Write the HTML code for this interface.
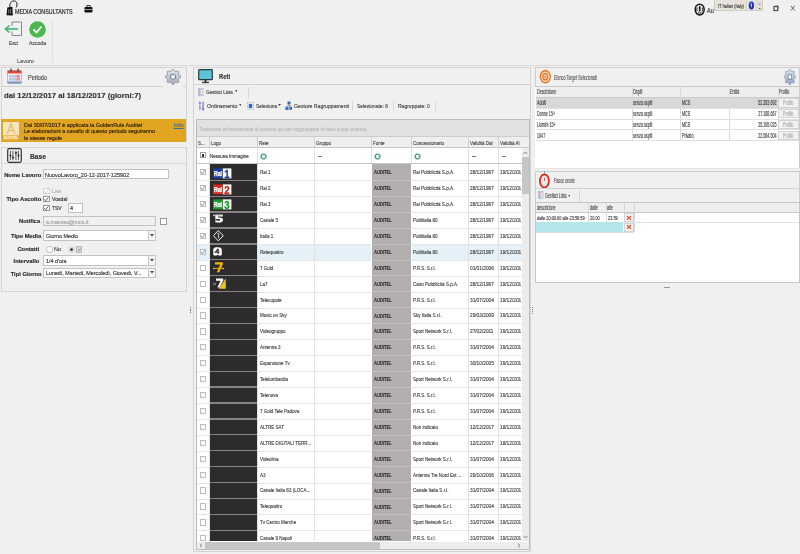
<!DOCTYPE html><html><head><meta charset="utf-8"><style>
*{margin:0;padding:0}
html,body{width:800px;height:554px;overflow:hidden;background:#f0f0f0}
body{position:relative;font-family:"Liberation Sans",sans-serif}
.a{position:absolute}
.t{position:absolute;white-space:nowrap;line-height:1;transform-origin:0 50%;font-family:"Liberation Sans",sans-serif;-webkit-text-stroke:0.15px currentColor}
</style></head><body><div id="app" style="position:absolute;left:0;top:0;width:800px;height:554px;will-change:transform">
<svg class="a" style="left:5.00px;top:0.00px" width="13" height="17" viewBox="0 0 13 17"><path d="M5.5 9 C4 5.5 5 1.2 8.5 0.9 C11.8 0.7 13 4 11.2 7.5" fill="none" stroke="#1a1a1a" stroke-width="1"/><path d="M1.5 15.2 L2.3 7.6 L7.4 6.8 L7.8 15.4 Z" fill="#111"/><path d="M3.7 9.2 V13.6 M5.6 9 V13.6" stroke="#d8d8d8" stroke-width=".55"/></svg>
<div class="t" style="left:15.00px;top:8.05px;font-size:7px;transform:scaleX(0.77);color:#1a1a1a;font-weight:normal;">MEDIA CONSULTANTS</div>
<svg class="a" style="left:84.00px;top:5.00px" width="9" height="8" viewBox="0 0 9 8"><rect x="0.5" y="2" width="8" height="5.5" rx="1" fill="#111"/><rect x="3" y="0.5" width="3" height="2" fill="none" stroke="#111" stroke-width=".8"/><rect x="0.5" y="4" width="8" height=".6" fill="#eee"/></svg>
<svg class="a" style="left:694.30px;top:2.80px" width="11.4" height="13.2" viewBox="0 0 11.4 13.2"><ellipse cx="5.7" cy="6.6" rx="5.2" ry="6.1" fill="#111"/><ellipse cx="5.7" cy="6.6" rx="3.8" ry="4.6" fill="#f4f4f4"/><rect x="4.9" y="3.2" width="1.6" height="5.2" fill="#111"/><path d="M3.2 4.5 Q2.4 6.6 3.2 8.4 M8.2 4.5 Q9 6.6 8.2 8.4 M4 9.6 Q5.7 10.6 7.4 9.6" fill="none" stroke="#111" stroke-width=".9"/></svg>
<div class="t" style="left:707.00px;top:7.05px;font-size:7px;transform:scaleX(0.8);color:#333;font-weight:normal;">Au</div>
<div class="a" style="left:714.00px;top:0.00px;width:48.50px;height:11.00px;background:#e4e2da;border:1px solid #cfcdc4;box-sizing:border-box;border-top:none"></div>
<div class="t" style="left:717.50px;top:3.00px;font-size:6px;transform:scaleX(0.66);color:#3a3a3a;font-weight:normal;">IT Italian (Italy)</div>
<div class="a" style="left:746.00px;top:1.00px;width:1.00px;height:9.00px;background:#d2d0c8"></div>
<svg class="a" style="left:748.00px;top:1.20px" width="7" height="9" viewBox="0 0 7 9"><ellipse cx="3.4" cy="4.4" rx="2.6" ry="4" fill="#1c30b0"/><ellipse cx="3.1" cy="3.6" rx="1.2" ry="2" fill="#4a6ae8"/><rect x="3" y="2.6" width=".9" height="3.6" fill="#c8d0f0"/></svg>
<div class="a" style="left:757.00px;top:1.00px;width:1.00px;height:9.00px;background:#d8d6ce"></div>
<svg class="a" style="left:757.60px;top:2.00px" width="4" height="8" viewBox="0 0 4 8"><path d="M0.8 2.6 L1.8 1.4 L2.8 2.6 Z M0.8 6 L1.8 7.2 L2.8 6 Z" fill="#333"/></svg>
<svg class="a" style="left:773.20px;top:5.20px" width="6" height="6.5" viewBox="0 0 6 6.5"><rect x="0.9" y="1.6" width="3.8" height="4" fill="none" stroke="#444" stroke-width="1.1"/><path d="M1.8 0.7 H5.4 V4.4" fill="none" stroke="#666" stroke-width=".6"/></svg>
<svg class="a" style="left:789.80px;top:5.20px" width="6" height="6.5" viewBox="0 0 6 6.5"><path d="M0.8 0.8 L4.8 5.6 M4.8 0.8 L0.8 5.6" stroke="#555" stroke-width=".85"/></svg>
<svg class="a" style="left:4.00px;top:21.00px" width="20" height="16" viewBox="0 0 20 16"><path d="M8 1 H17.5 V14.5 H8 M8 1 V5 M8 10.5 V14.5" fill="none" stroke="#8a8a8a" stroke-width="1"/><path d="M2 8 H14" stroke="#3cb371" stroke-width="1.6"/><path d="M5.5 4.5 L1.5 8 L5.5 11.5" fill="none" stroke="#3cb371" stroke-width="1.6"/></svg>
<svg class="a" style="left:29.00px;top:21.00px" width="17" height="17" viewBox="0 0 17 17"><circle cx="8.5" cy="8.5" r="8.3" fill="#4cb74c"/><path d="M4.5 8.5 L7.5 11.5 L12.5 5.5" fill="none" stroke="#fff" stroke-width="1.8"/></svg>
<div class="t" style="left:9.00px;top:40.10px;font-size:6px;transform:scaleX(0.8);color:#444;font-weight:normal;">Esci</div>
<div class="t" style="left:29.00px;top:40.10px;font-size:6px;transform:scaleX(0.85);color:#444;font-weight:normal;">Accoda</div>
<div class="t" style="left:17.00px;top:58.30px;font-size:6px;transform:scaleX(0.92);color:#555;font-weight:normal;">Lavoro</div>
<div class="a" style="left:51.50px;top:20.00px;width:1.00px;height:43.00px;background:#e2e2e2"></div>
<div class="a" style="left:0.00px;top:64.60px;width:800.00px;height:1.10px;background:#dadada"></div>
<div class="a" style="left:1.00px;top:67.00px;width:186.00px;height:75.00px;border:1px solid #d4d4d4;box-sizing:border-box;border-bottom:none"></div>
<svg class="a" style="left:7.00px;top:68.20px" width="15" height="16" viewBox="0 0 15 16"><rect x="0.5" y="2.5" width="14" height="13" rx="1" fill="#f2f5fb" stroke="#9aaed0" stroke-width=".8"/><rect x="0.5" y="2.5" width="14" height="3" fill="#e5483c"/><rect x="2" y="7" width="7.4" height="5.6" fill="#b4c0dc"/><rect x="9.4" y="7" width="3.6" height="5.6" fill="#ec8c8a"/><path d="M4.5 7 V12.6 M7 7 V12.6 M2 9.8 H13" stroke="#e8eef8" stroke-width=".6"/><rect x="0.5" y="13.4" width="14" height="2.1" fill="#8298c6"/><rect x="3.2" y="0.5" width="1.6" height="3.5" rx=".5" fill="#5a5a5a"/><rect x="10.4" y="0.5" width="1.6" height="3.5" rx=".5" fill="#5a5a5a"/></svg>
<div class="t" style="left:28.00px;top:75.12px;font-size:6.8px;transform:scaleX(0.81);color:#444;font-weight:normal;">Periodo</div>
<div class="a" style="left:1.00px;top:86.00px;width:162.00px;height:1.00px;background:#cfcfcf"></div>
<div class="a" style="left:183.00px;top:86.00px;width:4.00px;height:1.00px;background:#cfcfcf"></div>
<svg class="a" style="left:164.8px;top:69.2px" width="16" height="15.6" viewBox="0 0 20 20" preserveAspectRatio="none"><defs><linearGradient id="g1" x1="0" y1="0" x2="0" y2="1"><stop offset="0" stop-color="#e4e7ec"/><stop offset="1" stop-color="#a4acba"/></linearGradient></defs><polygon points="9.04,0.25 10.96,0.25 12.21,2.73 13.58,3.30 16.22,2.42 17.58,3.78 16.70,6.42 17.27,7.79 19.75,9.04 19.75,10.96 17.27,12.21 16.70,13.58 17.58,16.22 16.22,17.58 13.58,16.70 12.21,17.27 10.96,19.75 9.04,19.75 7.79,17.27 6.42,16.70 3.78,17.58 2.42,16.22 3.30,13.58 2.73,12.21 0.25,10.96 0.25,9.04 2.73,7.79 3.30,6.42 2.42,3.78 3.78,2.42 6.42,3.30 7.79,2.73" fill="url(#g1)" stroke="#8c919c" stroke-width="1" stroke-linejoin="round"/><circle cx="10" cy="10" r="3.2" fill="#f4f6fa" stroke="#7e8696" stroke-width="1.3"/></svg>
<div class="t" style="left:4.00px;top:92.30px;font-size:7.3px;transform:scaleX(1.06);color:#333;font-weight:bold;">dal 12/12/2017 al 18/12/2017 (giorni:7)</div>
<div class="a" style="left:1.00px;top:118.60px;width:185.20px;height:23.40px;background:#e2a521"></div>
<svg class="a" style="left:3.00px;top:122.00px" width="17" height="18" viewBox="0 0 17 18"><rect x="0" y="0" width="16" height="13.5" fill="#f4e4bf"/><path d="M4 12 L8 2 L12 12 M5.5 8.5 H10.5" fill="none" stroke="#e6c274" stroke-width="1.6"/><rect x="0" y="13.5" width="16" height="4.5" fill="#eab04a"/><text x="8" y="17.2" font-size="3.4" fill="#fff5dc" text-anchor="middle" font-family="Liberation Sans" font-weight="bold">AUDITEL</text></svg>
<div class="t" style="left:24.00px;top:122.59px;font-size:5.9px;transform:scaleX(0.92);color:#2e2000;font-weight:normal;">Dal 30/07/2017 è applicata la GoldenRule Auditel</div>
<div class="t" style="left:24.00px;top:129.28px;font-size:5.9px;transform:scaleX(0.92);color:#2e2000;font-weight:normal;">Le elaborazioni a cavallo di questo periodo seguiranno</div>
<div class="t" style="left:24.00px;top:135.99px;font-size:5.9px;transform:scaleX(0.92);color:#2e2000;font-weight:normal;">le stesse regole</div>
<div class="t" style="left:173.70px;top:123.09px;font-size:5.9px;transform:scaleX(1.0);color:#3d6f92;font-weight:normal;text-decoration:underline">Info</div>
<div class="a" style="left:1.00px;top:147.00px;width:186.00px;height:144.50px;border:1px solid #d4d4d4;box-sizing:border-box"></div>
<svg class="a" style="left:7.00px;top:148.00px" width="15" height="15" viewBox="0 0 15 15"><rect x="0.7" y="0.7" width="13.6" height="13.6" rx="1.5" fill="none" stroke="#333" stroke-width="1.2"/><path d="M3.4 2.8 V12.2 M5.9 2.8 V12.2 M8.9 2.8 V12.2 M11.4 2.8 V12.2" stroke="#333" stroke-width=".8"/><circle cx="3.5" cy="7.5" r="1" fill="#222"/><circle cx="6" cy="9.5" r="1" fill="#222"/><circle cx="9" cy="5" r="1" fill="#222"/><circle cx="11.5" cy="7.5" r="1" fill="#222"/></svg>
<div class="t" style="left:30.00px;top:152.88px;font-size:7.2px;transform:scaleX(0.93);color:#333;font-weight:bold;">Base</div>
<div class="a" style="left:1.00px;top:163.20px;width:186.00px;height:1.00px;background:#d6d6d6"></div>
<div class="t" style="right:758.80px;top:172.57px;font-size:5.8px;transform:scaleX(1.0);transform-origin:100% 50%;color:#2a2a2a;font-weight:bold;">Nome Lavoro</div>
<div class="a" style="left:43.10px;top:169.00px;width:125.50px;height:10.40px;background:#fff;border:1px solid #c2c2c2;box-sizing:border-box"></div>
<div class="t" style="left:45.40px;top:172.67px;font-size:5.8px;transform:scaleX(0.95);color:#333;font-weight:normal;">NuovoLavoro_20-12-2017-125902</div>
<div class="t" style="right:758.80px;top:196.97px;font-size:5.8px;transform:scaleX(1.0);transform-origin:100% 50%;color:#2a2a2a;font-weight:bold;">Tipo Ascolto</div>
<div class="a" style="left:43.30px;top:187.60px;width:6.30px;height:6.30px;background:#fff;border:1px solid #d4d4d4;box-sizing:border-box"></div>
<svg class="a" style="left:43.30px;top:187.60px" width="6.3" height="6.3" viewBox="0 0 6.3 6.3"><path d="M1.3 3.3 L2.7 4.8 L5.2 1.5" fill="none" stroke="#c4c4c4" stroke-width="0.85"/></svg>
<div class="t" style="left:51.50px;top:188.57px;font-size:5.8px;transform:scaleX(0.86);color:#b0b0b0;font-weight:normal;">Live</div>
<div class="a" style="left:43.30px;top:196.20px;width:6.30px;height:6.30px;background:#fff;border:1px solid #9a9a9a;box-sizing:border-box"></div>
<svg class="a" style="left:43.30px;top:196.20px" width="6.3" height="6.3" viewBox="0 0 6.3 6.3"><path d="M1.3 3.3 L2.7 4.8 L5.2 1.5" fill="none" stroke="#444" stroke-width="0.85"/></svg>
<div class="t" style="left:51.50px;top:197.27px;font-size:5.8px;transform:scaleX(0.885);color:#333;font-weight:normal;">Vosdal</div>
<div class="a" style="left:43.30px;top:205.20px;width:6.30px;height:6.30px;background:#fff;border:1px solid #9a9a9a;box-sizing:border-box"></div>
<svg class="a" style="left:43.30px;top:205.20px" width="6.3" height="6.3" viewBox="0 0 6.3 6.3"><path d="M1.3 3.3 L2.7 4.8 L5.2 1.5" fill="none" stroke="#444" stroke-width="0.85"/></svg>
<div class="t" style="left:51.50px;top:206.37px;font-size:5.8px;transform:scaleX(0.86);color:#333;font-weight:normal;">TSV</div>
<div class="a" style="left:67.50px;top:203.00px;width:15.00px;height:10.10px;background:#fff;border:1px solid #c2c2c2;box-sizing:border-box"></div>
<div class="t" style="left:69.60px;top:206.37px;font-size:5.8px;transform:scaleX(0.95);color:#333;font-weight:normal;">4</div>
<div class="t" style="right:759.70px;top:219.37px;font-size:5.8px;transform:scaleX(1.0);transform-origin:100% 50%;color:#2a2a2a;font-weight:bold;">Notifica</div>
<div class="a" style="left:43.30px;top:216.00px;width:113.20px;height:10.20px;background:#f0f0f0;border:1px solid #c2c2c2;box-sizing:border-box"></div>
<div class="t" style="left:45.60px;top:219.57px;font-size:5.8px;transform:scaleX(0.92);color:#a0a0a0;font-weight:normal;">a.mazzeo@mcs.it</div>
<div class="a" style="left:160.00px;top:218.20px;width:6.50px;height:6.60px;background:#fff;border:1px solid #9a9a9a;box-sizing:border-box"></div>
<div class="t" style="right:758.80px;top:234.27px;font-size:5.8px;transform:scaleX(1.0);transform-origin:100% 50%;color:#2a2a2a;font-weight:bold;">Tipo Media</div>
<div class="a" style="left:43.30px;top:230.30px;width:113.00px;height:10.50px;background:#fff;border:1px solid #c2c2c2;box-sizing:border-box"></div>
<div class="t" style="left:45.60px;top:234.07px;font-size:5.8px;transform:scaleX(0.92);color:#333;font-weight:normal;">Giorno Medio</div>
<div class="a" style="left:147.80px;top:230.30px;width:8.50px;height:10.50px;border:1px solid #c2c2c2;box-sizing:border-box;background:#f5f5f5"></div>
<svg class="a" style="left:150.00px;top:234.35px" width="4" height="3" viewBox="0 0 4 3"><path d="M0 0 H4 L2 2.5 Z" fill="#444"/></svg>
<div class="t" style="right:760.70px;top:246.67px;font-size:5.8px;transform:scaleX(1.0);transform-origin:100% 50%;color:#2a2a2a;font-weight:bold;">Contatti</div>
<svg class="a" style="left:45.60px;top:245.60px" width="7.2" height="7.2" viewBox="0 0 7.2 7.2"><circle cx="3.6" cy="3.6" r="3.1" fill="#fff" stroke="#a8a8a8" stroke-width=".7"/></svg>
<div class="t" style="left:53.70px;top:246.77px;font-size:5.8px;transform:scaleX(0.95);color:#444;font-weight:normal;">No</div>
<svg class="a" style="left:68.20px;top:245.60px" width="7.2" height="7.2" viewBox="0 0 7.2 7.2"><circle cx="3.6" cy="3.6" r="3.1" fill="#e4e4e4" stroke="#c8c8c8" stroke-width=".6"/><circle cx="3.6" cy="3.6" r="1.3" fill="#222"/></svg>
<div class="a" style="left:76.20px;top:245.50px;width:6.00px;height:7.50px;background:#d4d4d4;border:1px solid #bdbdbd;box-sizing:border-box"></div>
<svg class="a" style="left:76.20px;top:245.50px" width="6" height="7.5" viewBox="0 0 6 7.5"><path d="M1.5 3.5 L2.8 5 L4.8 2.2" fill="none" stroke="#888" stroke-width=".6"/></svg>
<div class="t" style="right:760.70px;top:258.97px;font-size:5.8px;transform:scaleX(1.0);transform-origin:100% 50%;color:#2a2a2a;font-weight:bold;">Intervallo</div>
<div class="a" style="left:43.30px;top:255.00px;width:113.00px;height:10.70px;background:#fff;border:1px solid #c2c2c2;box-sizing:border-box"></div>
<div class="t" style="left:45.60px;top:258.77px;font-size:5.8px;transform:scaleX(0.92);color:#333;font-weight:normal;">1/4 d'ora</div>
<div class="a" style="left:147.80px;top:255.00px;width:8.50px;height:10.70px;border:1px solid #c2c2c2;box-sizing:border-box;background:#f5f5f5"></div>
<svg class="a" style="left:150.00px;top:259.15px" width="4" height="3" viewBox="0 0 4 3"><path d="M0 0 H4 L2 2.5 Z" fill="#444"/></svg>
<div class="t" style="right:758.50px;top:271.57px;font-size:5.8px;transform:scaleX(1.0);transform-origin:100% 50%;color:#2a2a2a;font-weight:bold;">Tipi Giorno</div>
<div class="a" style="left:43.30px;top:267.60px;width:113.00px;height:10.10px;background:#fff;border:1px solid #c2c2c2;box-sizing:border-box"></div>
<div class="t" style="left:45.60px;top:271.27px;font-size:5.8px;transform:scaleX(0.92);color:#333;font-weight:normal;">Lunedì, Martedì, Mercoledì, Giovedì, V...</div>
<div class="a" style="left:147.80px;top:267.60px;width:8.50px;height:10.10px;border:1px solid #c2c2c2;box-sizing:border-box;background:#f5f5f5"></div>
<svg class="a" style="left:150.00px;top:271.45px" width="4" height="3" viewBox="0 0 4 3"><path d="M0 0 H4 L2 2.5 Z" fill="#444"/></svg>
<div class="a" style="left:189.70px;top:306.80px;width:1.10px;height:1.10px;background:#707070"></div>
<div class="a" style="left:189.70px;top:308.55px;width:1.10px;height:1.10px;background:#707070"></div>
<div class="a" style="left:189.70px;top:310.30px;width:1.10px;height:1.10px;background:#707070"></div>
<div class="a" style="left:189.70px;top:312.05px;width:1.10px;height:1.10px;background:#707070"></div>
<div class="a" style="left:532.10px;top:307.40px;width:1.10px;height:1.10px;background:#808080"></div>
<div class="a" style="left:532.10px;top:309.15px;width:1.10px;height:1.10px;background:#808080"></div>
<div class="a" style="left:532.10px;top:310.90px;width:1.10px;height:1.10px;background:#808080"></div>
<div class="a" style="left:532.10px;top:312.65px;width:1.10px;height:1.10px;background:#808080"></div>
<div class="a" style="left:193.20px;top:67.20px;width:337.60px;height:484.80px;border:1px solid #d4d4d4;box-sizing:border-box"></div>
<svg class="a" style="left:198.00px;top:69.00px" width="15" height="15" viewBox="0 0 15 15"><rect x="0.7" y="0.7" width="13.6" height="10" rx="0.8" fill="#5bc4d8" stroke="#2c3a40" stroke-width="1.2"/><rect x="6.5" y="10.7" width="2" height="2.3" fill="#2c3a40"/><rect x="4" y="12.8" width="7" height="1.3" fill="#2c3a40"/></svg>
<div class="t" style="left:219.00px;top:73.28px;font-size:7.2px;transform:scaleX(0.81);color:#333;font-weight:bold;">Reti</div>
<div class="a" style="left:193.20px;top:84.30px;width:337.60px;height:1.00px;background:#d2d2d2"></div>
<svg class="a" style="left:197.80px;top:87.80px" width="6.6" height="8.2" viewBox="0 0 6.6 8.2"><rect x="0.4" y="0.4" width="5.8" height="7.3999999999999995" fill="#f6f6fb" stroke="#9aa6cc" stroke-width=".6"/><rect x="1" y="1.31" width="1.6" height="1.3" fill="#e8743a"/><rect x="1" y="3.53" width="1.6" height="1.3" fill="#e8743a"/><rect x="1" y="5.74" width="1.6" height="1.3" fill="#6a8ad8"/><path d="M3.2 1.96 H5.6 M3.2 4.18 H5.6 M3.2 6.39 H5.6" stroke="#7a86b8" stroke-width=".6"/></svg>
<div class="t" style="left:206.00px;top:88.73px;font-size:6.2px;transform:scaleX(0.73);color:#444;font-weight:normal;">Gestisci Lista</div>
<svg class="a" style="left:234.60px;top:90.40px" width="2.6" height="1.9" viewBox="0 0 2.6 1.9"><path d="M0 0 H3 L1.5 2 Z" fill="#444"/></svg>
<div class="a" style="left:248.30px;top:87.00px;width:1.00px;height:10.50px;background:#d8d8d8"></div>
<svg class="a" style="left:197.60px;top:100.60px" width="7" height="10" viewBox="0 0 7 10"><path d="M1.9 2 V9.5 M5.1 0.5 V8" stroke="#9a86d0" stroke-width=".9"/><path d="M0.5 2.6 L1.9 0.3 L3.3 2.6 Z" fill="#8a5ad0"/><path d="M3.7 7.4 L5.1 9.7 L6.5 7.4 Z" fill="#2a6ad0"/><path d="M5.1 1 V7.5" stroke="#5a8ad8" stroke-width=".9"/><rect x="1.3" y="5.5" width="1.2" height="2.2" fill="#d06aa0"/></svg>
<div class="t" style="left:206.90px;top:102.73px;font-size:6.2px;transform:scaleX(0.85);color:#444;font-weight:normal;">Ordinamento</div>
<svg class="a" style="left:238.90px;top:104.40px" width="2.6" height="1.9" viewBox="0 0 2.6 1.9"><path d="M0 0 H3 L1.5 2 Z" fill="#444"/></svg>
<svg class="a" style="left:247.20px;top:101.80px" width="7" height="8" viewBox="0 0 7 8"><rect x="0.4" y="0.4" width="6.2" height="7.2" fill="none" stroke="#777" stroke-width=".5" stroke-dasharray="1 .8"/><rect x="1.8" y="1.9" width="3.4" height="4.2" fill="#2a6ac8"/></svg>
<div class="t" style="left:255.60px;top:102.73px;font-size:6.2px;transform:scaleX(0.78);color:#444;font-weight:normal;">Seleziona</div>
<svg class="a" style="left:278.40px;top:104.40px" width="2.6" height="1.9" viewBox="0 0 2.6 1.9"><path d="M0 0 H3 L1.5 2 Z" fill="#444"/></svg>
<svg class="a" style="left:284.80px;top:100.80px" width="7.5" height="9.5" viewBox="0 0 7.5 9.5"><rect x="2.5" y="0.5" width="3" height="3" fill="#4a6a9a"/><rect x="0.3" y="5.8" width="3.2" height="3.2" fill="#3a7ad8"/><rect x="4.3" y="5.8" width="3" height="3" fill="#4a6a9a"/><path d="M4 3.5 V5 M1.9 5 H5.8 V5.8 M1.9 5 V5.8" fill="none" stroke="#555" stroke-width=".5"/></svg>
<div class="t" style="left:294.00px;top:102.73px;font-size:6.2px;transform:scaleX(0.835);color:#444;font-weight:normal;">Gestore Ragruppamenti</div>
<div class="a" style="left:352.00px;top:100.50px;width:1.00px;height:10.50px;background:#d8d8d8"></div>
<div class="t" style="left:357.00px;top:102.73px;font-size:6.2px;transform:scaleX(0.79);color:#444;font-weight:normal;">Selezionate: 6</div>
<div class="a" style="left:393.00px;top:100.50px;width:1.00px;height:10.50px;background:#d8d8d8"></div>
<div class="t" style="left:397.50px;top:102.73px;font-size:6.2px;transform:scaleX(0.81);color:#444;font-weight:normal;">Ragruppate: 0</div>
<div class="a" style="left:435.00px;top:100.50px;width:1.00px;height:10.50px;background:#d8d8d8"></div>
<div class="a" style="left:196.40px;top:119.30px;width:333.20px;height:430.50px;background:#fff;border:1px solid #bcbcbc;box-sizing:border-box"></div>
<div class="a" style="left:197.40px;top:120.30px;width:331.20px;height:15.90px;background:#e2e2e2"></div>
<div class="t" style="left:198.60px;top:126.33px;font-size:6.2px;transform:scaleX(0.761);color:#b8b8b8;font-weight:normal;">Trascinare un'intestazione di colonna qui per raggruppare in base a tale colonna.</div>
<div class="a" style="left:197.40px;top:136.00px;width:331.20px;height:1.00px;background:#cdcdcd"></div>
<div class="a" style="left:197.40px;top:137.00px;width:331.20px;height:10.60px;background:#efefef"></div>
<div class="a" style="left:197.40px;top:147.40px;width:331.20px;height:1.00px;background:#c8c8c8"></div>
<div class="t" style="left:198.40px;top:139.73px;font-size:6.2px;transform:scaleX(0.73);color:#444;font-weight:normal;">S...</div>
<div class="t" style="left:210.80px;top:139.73px;font-size:6.2px;transform:scaleX(0.73);color:#444;font-weight:normal;">Logo</div>
<div class="t" style="left:258.80px;top:139.73px;font-size:6.2px;transform:scaleX(0.73);color:#444;font-weight:normal;">Rete</div>
<div class="t" style="left:315.70px;top:139.73px;font-size:6.2px;transform:scaleX(0.73);color:#444;font-weight:normal;">Gruppo</div>
<div class="t" style="left:372.70px;top:139.73px;font-size:6.2px;transform:scaleX(0.73);color:#444;font-weight:normal;">Fonte</div>
<div class="t" style="left:412.60px;top:139.73px;font-size:6.2px;transform:scaleX(0.73);color:#444;font-weight:normal;">Concessionario</div>
<div class="t" style="left:469.50px;top:139.73px;font-size:6.2px;transform:scaleX(0.73);color:#444;font-weight:normal;">Validità Dal</div>
<div class="t" style="left:499.70px;top:139.73px;font-size:6.2px;transform:scaleX(0.73);color:#444;font-weight:normal;">Validità Al</div>
<div class="a" style="left:209.40px;top:137.00px;width:1.00px;height:10.50px;background:#d0d0d0"></div>
<div class="a" style="left:257.40px;top:137.00px;width:1.00px;height:10.50px;background:#d0d0d0"></div>
<div class="a" style="left:314.30px;top:137.00px;width:1.00px;height:10.50px;background:#d0d0d0"></div>
<div class="a" style="left:371.30px;top:137.00px;width:1.00px;height:10.50px;background:#d0d0d0"></div>
<div class="a" style="left:411.20px;top:137.00px;width:1.00px;height:10.50px;background:#d0d0d0"></div>
<div class="a" style="left:468.10px;top:137.00px;width:1.00px;height:10.50px;background:#d0d0d0"></div>
<div class="a" style="left:498.30px;top:137.00px;width:1.00px;height:10.50px;background:#d0d0d0"></div>
<div class="a" style="left:209.40px;top:148.40px;width:1.00px;height:15.40px;background:#e0e0e0"></div>
<div class="a" style="left:257.40px;top:148.40px;width:1.00px;height:15.40px;background:#e0e0e0"></div>
<div class="a" style="left:314.30px;top:148.40px;width:1.00px;height:15.40px;background:#e0e0e0"></div>
<div class="a" style="left:371.30px;top:148.40px;width:1.00px;height:15.40px;background:#e0e0e0"></div>
<div class="a" style="left:411.20px;top:148.40px;width:1.00px;height:15.40px;background:#e0e0e0"></div>
<div class="a" style="left:468.10px;top:148.40px;width:1.00px;height:15.40px;background:#e0e0e0"></div>
<div class="a" style="left:498.30px;top:148.40px;width:1.00px;height:15.40px;background:#e0e0e0"></div>
<div class="a" style="left:197.40px;top:163.40px;width:331.20px;height:1.00px;background:#c4c4c4"></div>
<div class="a" style="left:200.20px;top:152.20px;width:5.60px;height:6.20px;background:#fff;border:1px solid #a0a0a0;box-sizing:border-box"></div>
<div class="a" style="left:201.90px;top:154.00px;width:2.20px;height:2.60px;background:#333"></div>
<div class="t" style="left:210.40px;top:153.33px;font-size:6.2px;transform:scaleX(0.726);color:#333;font-weight:normal;">Nessuna Immagine</div>
<svg class="a" style="left:259.70px;top:152.80px" width="7" height="7" viewBox="0 0 7 7"><path d="M2.2 0.5 H4.8 L6.5 2.2 V4.8 L4.8 6.5 H2.2 L0.5 4.8 V2.2 Z" fill="#58a888"/><path d="M2.6 2 H4.4 L5 2.6 V4.4 L4.4 5 H2.6 L2 4.4 V2.6 Z" fill="#e8f4ee"/></svg>
<svg class="a" style="left:373.60px;top:152.80px" width="7" height="7" viewBox="0 0 7 7"><path d="M2.2 0.5 H4.8 L6.5 2.2 V4.8 L4.8 6.5 H2.2 L0.5 4.8 V2.2 Z" fill="#58a888"/><path d="M2.6 2 H4.4 L5 2.6 V4.4 L4.4 5 H2.6 L2 4.4 V2.6 Z" fill="#e8f4ee"/></svg>
<svg class="a" style="left:413.50px;top:152.80px" width="7" height="7" viewBox="0 0 7 7"><path d="M2.2 0.5 H4.8 L6.5 2.2 V4.8 L4.8 6.5 H2.2 L0.5 4.8 V2.2 Z" fill="#58a888"/><path d="M2.6 2 H4.4 L5 2.6 V4.4 L4.4 5 H2.6 L2 4.4 V2.6 Z" fill="#e8f4ee"/></svg>
<div class="a" style="left:318.30px;top:155.70px;width:4.20px;height:0.90px;background:#777"></div>
<div class="a" style="left:472.00px;top:155.70px;width:4.20px;height:0.90px;background:#777"></div>
<div class="a" style="left:502.20px;top:155.70px;width:4.20px;height:0.90px;background:#777"></div>
<div class="a" style="left:197.4px;top:164.3px;width:324.90px;height:377.20px;overflow:hidden">
<div class="a" style="left:12.50px;top:0.00px;width:47.50px;height:15.91px;background:#2d2b2b"></div>
<div class="a" style="left:174.40px;top:0.00px;width:39.40px;height:15.91px;background:#b2aeae"></div>
<div class="a" style="left:12.50px;top:15.91px;width:47.50px;height:15.91px;background:#2d2b2b"></div>
<div class="a" style="left:174.40px;top:15.91px;width:39.40px;height:15.91px;background:#b2aeae"></div>
<div class="a" style="left:12.50px;top:31.82px;width:47.50px;height:15.91px;background:#2d2b2b"></div>
<div class="a" style="left:174.40px;top:31.82px;width:39.40px;height:15.91px;background:#b2aeae"></div>
<div class="a" style="left:12.50px;top:47.73px;width:47.50px;height:15.91px;background:#2d2b2b"></div>
<div class="a" style="left:174.40px;top:47.73px;width:39.40px;height:15.91px;background:#b2aeae"></div>
<div class="a" style="left:12.50px;top:63.64px;width:47.50px;height:15.91px;background:#2d2b2b"></div>
<div class="a" style="left:174.40px;top:63.64px;width:39.40px;height:15.91px;background:#b2aeae"></div>
<div class="a" style="left:0.00px;top:79.55px;width:12.00px;height:15.91px;background:#e5f1f9"></div>
<div class="a" style="left:60.50px;top:79.55px;width:113.40px;height:15.91px;background:#e5f1f9"></div>
<div class="a" style="left:214.30px;top:79.55px;width:110.60px;height:15.91px;background:#e5f1f9"></div>
<div class="a" style="left:12.50px;top:79.55px;width:47.50px;height:15.91px;background:#2d2b2b"></div>
<div class="a" style="left:174.40px;top:79.55px;width:39.40px;height:15.91px;background:#b2aeae"></div>
<div class="a" style="left:12.50px;top:95.46px;width:47.50px;height:15.91px;background:#2d2b2b"></div>
<div class="a" style="left:174.40px;top:95.46px;width:39.40px;height:15.91px;background:#b2aeae"></div>
<div class="a" style="left:12.50px;top:111.37px;width:47.50px;height:15.91px;background:#2d2b2b"></div>
<div class="a" style="left:174.40px;top:111.37px;width:39.40px;height:15.91px;background:#b2aeae"></div>
<div class="a" style="left:12.50px;top:127.28px;width:47.50px;height:15.91px;background:#2d2b2b"></div>
<div class="a" style="left:174.40px;top:127.28px;width:39.40px;height:15.91px;background:#b2aeae"></div>
<div class="a" style="left:12.50px;top:143.19px;width:47.50px;height:15.91px;background:#2d2b2b"></div>
<div class="a" style="left:174.40px;top:143.19px;width:39.40px;height:15.91px;background:#b2aeae"></div>
<div class="a" style="left:12.50px;top:159.10px;width:47.50px;height:15.91px;background:#2d2b2b"></div>
<div class="a" style="left:174.40px;top:159.10px;width:39.40px;height:15.91px;background:#b2aeae"></div>
<div class="a" style="left:12.50px;top:175.01px;width:47.50px;height:15.91px;background:#2d2b2b"></div>
<div class="a" style="left:174.40px;top:175.01px;width:39.40px;height:15.91px;background:#b2aeae"></div>
<div class="a" style="left:12.50px;top:190.92px;width:47.50px;height:15.91px;background:#2d2b2b"></div>
<div class="a" style="left:174.40px;top:190.92px;width:39.40px;height:15.91px;background:#b2aeae"></div>
<div class="a" style="left:12.50px;top:206.83px;width:47.50px;height:15.91px;background:#2d2b2b"></div>
<div class="a" style="left:174.40px;top:206.83px;width:39.40px;height:15.91px;background:#b2aeae"></div>
<div class="a" style="left:12.50px;top:222.74px;width:47.50px;height:15.91px;background:#2d2b2b"></div>
<div class="a" style="left:174.40px;top:222.74px;width:39.40px;height:15.91px;background:#b2aeae"></div>
<div class="a" style="left:12.50px;top:238.65px;width:47.50px;height:15.91px;background:#2d2b2b"></div>
<div class="a" style="left:174.40px;top:238.65px;width:39.40px;height:15.91px;background:#b2aeae"></div>
<div class="a" style="left:12.50px;top:254.56px;width:47.50px;height:15.91px;background:#2d2b2b"></div>
<div class="a" style="left:174.40px;top:254.56px;width:39.40px;height:15.91px;background:#b2aeae"></div>
<div class="a" style="left:12.50px;top:270.47px;width:47.50px;height:15.91px;background:#2d2b2b"></div>
<div class="a" style="left:174.40px;top:270.47px;width:39.40px;height:15.91px;background:#b2aeae"></div>
<div class="a" style="left:12.50px;top:286.38px;width:47.50px;height:15.91px;background:#2d2b2b"></div>
<div class="a" style="left:174.40px;top:286.38px;width:39.40px;height:15.91px;background:#b2aeae"></div>
<div class="a" style="left:12.50px;top:302.29px;width:47.50px;height:15.91px;background:#2d2b2b"></div>
<div class="a" style="left:174.40px;top:302.29px;width:39.40px;height:15.91px;background:#b2aeae"></div>
<div class="a" style="left:12.50px;top:318.20px;width:47.50px;height:15.91px;background:#2d2b2b"></div>
<div class="a" style="left:174.40px;top:318.20px;width:39.40px;height:15.91px;background:#b2aeae"></div>
<div class="a" style="left:12.50px;top:334.11px;width:47.50px;height:15.91px;background:#2d2b2b"></div>
<div class="a" style="left:174.40px;top:334.11px;width:39.40px;height:15.91px;background:#b2aeae"></div>
<div class="a" style="left:12.50px;top:350.02px;width:47.50px;height:15.91px;background:#2d2b2b"></div>
<div class="a" style="left:174.40px;top:350.02px;width:39.40px;height:15.91px;background:#b2aeae"></div>
<div class="a" style="left:12.50px;top:365.93px;width:47.50px;height:15.91px;background:#2d2b2b"></div>
<div class="a" style="left:174.40px;top:365.93px;width:39.40px;height:15.91px;background:#b2aeae"></div>
<div class="a" style="left:12.50px;top:15.31px;width:47.50px;height:1.30px;background:#858383"></div>
<div class="a" style="left:174.40px;top:15.71px;width:39.40px;height:0.80px;background:#c2bfbf"></div>
<div class="a" style="left:0.00px;top:16.01px;width:12.50px;height:0.80px;background:#e6e6e6"></div>
<div class="a" style="left:60.00px;top:16.01px;width:114.40px;height:0.80px;background:#e6e6e6"></div>
<div class="a" style="left:213.80px;top:16.01px;width:111.10px;height:0.80px;background:#e6e6e6"></div>
<div class="a" style="left:12.00px;top:0.00px;width:0.60px;height:15.91px;background:#e0e0e0"></div>
<div class="a" style="left:60.00px;top:0.00px;width:0.60px;height:15.91px;background:#e0e0e0"></div>
<div class="a" style="left:116.90px;top:0.00px;width:0.70px;height:15.91px;background:#e2e2e2"></div>
<div class="a" style="left:270.70px;top:0.00px;width:0.70px;height:15.91px;background:#e2e2e2"></div>
<div class="a" style="left:300.90px;top:0.00px;width:0.70px;height:15.91px;background:#e2e2e2"></div>
<div class="a" style="left:12.50px;top:31.22px;width:47.50px;height:1.30px;background:#858383"></div>
<div class="a" style="left:174.40px;top:31.62px;width:39.40px;height:0.80px;background:#c2bfbf"></div>
<div class="a" style="left:0.00px;top:31.92px;width:12.50px;height:0.80px;background:#e6e6e6"></div>
<div class="a" style="left:60.00px;top:31.92px;width:114.40px;height:0.80px;background:#e6e6e6"></div>
<div class="a" style="left:213.80px;top:31.92px;width:111.10px;height:0.80px;background:#e6e6e6"></div>
<div class="a" style="left:12.00px;top:15.91px;width:0.60px;height:15.91px;background:#e0e0e0"></div>
<div class="a" style="left:60.00px;top:15.91px;width:0.60px;height:15.91px;background:#e0e0e0"></div>
<div class="a" style="left:116.90px;top:15.91px;width:0.70px;height:15.91px;background:#e2e2e2"></div>
<div class="a" style="left:270.70px;top:15.91px;width:0.70px;height:15.91px;background:#e2e2e2"></div>
<div class="a" style="left:300.90px;top:15.91px;width:0.70px;height:15.91px;background:#e2e2e2"></div>
<div class="a" style="left:12.50px;top:47.13px;width:47.50px;height:1.30px;background:#858383"></div>
<div class="a" style="left:174.40px;top:47.53px;width:39.40px;height:0.80px;background:#c2bfbf"></div>
<div class="a" style="left:0.00px;top:47.83px;width:12.50px;height:0.80px;background:#e6e6e6"></div>
<div class="a" style="left:60.00px;top:47.83px;width:114.40px;height:0.80px;background:#e6e6e6"></div>
<div class="a" style="left:213.80px;top:47.83px;width:111.10px;height:0.80px;background:#e6e6e6"></div>
<div class="a" style="left:12.00px;top:31.82px;width:0.60px;height:15.91px;background:#e0e0e0"></div>
<div class="a" style="left:60.00px;top:31.82px;width:0.60px;height:15.91px;background:#e0e0e0"></div>
<div class="a" style="left:116.90px;top:31.82px;width:0.70px;height:15.91px;background:#e2e2e2"></div>
<div class="a" style="left:270.70px;top:31.82px;width:0.70px;height:15.91px;background:#e2e2e2"></div>
<div class="a" style="left:300.90px;top:31.82px;width:0.70px;height:15.91px;background:#e2e2e2"></div>
<div class="a" style="left:12.50px;top:63.04px;width:47.50px;height:1.30px;background:#858383"></div>
<div class="a" style="left:174.40px;top:63.44px;width:39.40px;height:0.80px;background:#c2bfbf"></div>
<div class="a" style="left:0.00px;top:63.74px;width:12.50px;height:0.80px;background:#e6e6e6"></div>
<div class="a" style="left:60.00px;top:63.74px;width:114.40px;height:0.80px;background:#e6e6e6"></div>
<div class="a" style="left:213.80px;top:63.74px;width:111.10px;height:0.80px;background:#e6e6e6"></div>
<div class="a" style="left:12.00px;top:47.73px;width:0.60px;height:15.91px;background:#e0e0e0"></div>
<div class="a" style="left:60.00px;top:47.73px;width:0.60px;height:15.91px;background:#e0e0e0"></div>
<div class="a" style="left:116.90px;top:47.73px;width:0.70px;height:15.91px;background:#e2e2e2"></div>
<div class="a" style="left:270.70px;top:47.73px;width:0.70px;height:15.91px;background:#e2e2e2"></div>
<div class="a" style="left:300.90px;top:47.73px;width:0.70px;height:15.91px;background:#e2e2e2"></div>
<div class="a" style="left:12.50px;top:78.95px;width:47.50px;height:1.30px;background:#858383"></div>
<div class="a" style="left:174.40px;top:79.35px;width:39.40px;height:0.80px;background:#c2bfbf"></div>
<div class="a" style="left:0.00px;top:79.65px;width:12.50px;height:0.80px;background:#e6e6e6"></div>
<div class="a" style="left:60.00px;top:79.65px;width:114.40px;height:0.80px;background:#e6e6e6"></div>
<div class="a" style="left:213.80px;top:79.65px;width:111.10px;height:0.80px;background:#e6e6e6"></div>
<div class="a" style="left:12.00px;top:63.64px;width:0.60px;height:15.91px;background:#e0e0e0"></div>
<div class="a" style="left:60.00px;top:63.64px;width:0.60px;height:15.91px;background:#e0e0e0"></div>
<div class="a" style="left:116.90px;top:63.64px;width:0.70px;height:15.91px;background:#e2e2e2"></div>
<div class="a" style="left:270.70px;top:63.64px;width:0.70px;height:15.91px;background:#e2e2e2"></div>
<div class="a" style="left:300.90px;top:63.64px;width:0.70px;height:15.91px;background:#e2e2e2"></div>
<div class="a" style="left:12.50px;top:94.86px;width:47.50px;height:1.30px;background:#858383"></div>
<div class="a" style="left:174.40px;top:95.26px;width:39.40px;height:0.80px;background:#c2bfbf"></div>
<div class="a" style="left:0.00px;top:95.56px;width:12.50px;height:0.80px;background:#e6e6e6"></div>
<div class="a" style="left:60.00px;top:95.56px;width:114.40px;height:0.80px;background:#e6e6e6"></div>
<div class="a" style="left:213.80px;top:95.56px;width:111.10px;height:0.80px;background:#e6e6e6"></div>
<div class="a" style="left:12.00px;top:79.55px;width:0.60px;height:15.91px;background:#e0e0e0"></div>
<div class="a" style="left:60.00px;top:79.55px;width:0.60px;height:15.91px;background:#e0e0e0"></div>
<div class="a" style="left:116.90px;top:79.55px;width:0.70px;height:15.91px;background:#e2e2e2"></div>
<div class="a" style="left:270.70px;top:79.55px;width:0.70px;height:15.91px;background:#e2e2e2"></div>
<div class="a" style="left:300.90px;top:79.55px;width:0.70px;height:15.91px;background:#e2e2e2"></div>
<div class="a" style="left:12.50px;top:110.77px;width:47.50px;height:1.30px;background:#858383"></div>
<div class="a" style="left:174.40px;top:111.17px;width:39.40px;height:0.80px;background:#c2bfbf"></div>
<div class="a" style="left:0.00px;top:111.47px;width:12.50px;height:0.80px;background:#e6e6e6"></div>
<div class="a" style="left:60.00px;top:111.47px;width:114.40px;height:0.80px;background:#e6e6e6"></div>
<div class="a" style="left:213.80px;top:111.47px;width:111.10px;height:0.80px;background:#e6e6e6"></div>
<div class="a" style="left:12.00px;top:95.46px;width:0.60px;height:15.91px;background:#e0e0e0"></div>
<div class="a" style="left:60.00px;top:95.46px;width:0.60px;height:15.91px;background:#e0e0e0"></div>
<div class="a" style="left:116.90px;top:95.46px;width:0.70px;height:15.91px;background:#e2e2e2"></div>
<div class="a" style="left:270.70px;top:95.46px;width:0.70px;height:15.91px;background:#e2e2e2"></div>
<div class="a" style="left:300.90px;top:95.46px;width:0.70px;height:15.91px;background:#e2e2e2"></div>
<div class="a" style="left:12.50px;top:126.68px;width:47.50px;height:1.30px;background:#858383"></div>
<div class="a" style="left:174.40px;top:127.08px;width:39.40px;height:0.80px;background:#c2bfbf"></div>
<div class="a" style="left:0.00px;top:127.38px;width:12.50px;height:0.80px;background:#e6e6e6"></div>
<div class="a" style="left:60.00px;top:127.38px;width:114.40px;height:0.80px;background:#e6e6e6"></div>
<div class="a" style="left:213.80px;top:127.38px;width:111.10px;height:0.80px;background:#e6e6e6"></div>
<div class="a" style="left:12.00px;top:111.37px;width:0.60px;height:15.91px;background:#e0e0e0"></div>
<div class="a" style="left:60.00px;top:111.37px;width:0.60px;height:15.91px;background:#e0e0e0"></div>
<div class="a" style="left:116.90px;top:111.37px;width:0.70px;height:15.91px;background:#e2e2e2"></div>
<div class="a" style="left:270.70px;top:111.37px;width:0.70px;height:15.91px;background:#e2e2e2"></div>
<div class="a" style="left:300.90px;top:111.37px;width:0.70px;height:15.91px;background:#e2e2e2"></div>
<div class="a" style="left:12.50px;top:142.59px;width:47.50px;height:1.30px;background:#858383"></div>
<div class="a" style="left:174.40px;top:142.99px;width:39.40px;height:0.80px;background:#c2bfbf"></div>
<div class="a" style="left:0.00px;top:143.29px;width:12.50px;height:0.80px;background:#e6e6e6"></div>
<div class="a" style="left:60.00px;top:143.29px;width:114.40px;height:0.80px;background:#e6e6e6"></div>
<div class="a" style="left:213.80px;top:143.29px;width:111.10px;height:0.80px;background:#e6e6e6"></div>
<div class="a" style="left:12.00px;top:127.28px;width:0.60px;height:15.91px;background:#e0e0e0"></div>
<div class="a" style="left:60.00px;top:127.28px;width:0.60px;height:15.91px;background:#e0e0e0"></div>
<div class="a" style="left:116.90px;top:127.28px;width:0.70px;height:15.91px;background:#e2e2e2"></div>
<div class="a" style="left:270.70px;top:127.28px;width:0.70px;height:15.91px;background:#e2e2e2"></div>
<div class="a" style="left:300.90px;top:127.28px;width:0.70px;height:15.91px;background:#e2e2e2"></div>
<div class="a" style="left:12.50px;top:158.50px;width:47.50px;height:1.30px;background:#858383"></div>
<div class="a" style="left:174.40px;top:158.90px;width:39.40px;height:0.80px;background:#c2bfbf"></div>
<div class="a" style="left:0.00px;top:159.20px;width:12.50px;height:0.80px;background:#e6e6e6"></div>
<div class="a" style="left:60.00px;top:159.20px;width:114.40px;height:0.80px;background:#e6e6e6"></div>
<div class="a" style="left:213.80px;top:159.20px;width:111.10px;height:0.80px;background:#e6e6e6"></div>
<div class="a" style="left:12.00px;top:143.19px;width:0.60px;height:15.91px;background:#e0e0e0"></div>
<div class="a" style="left:60.00px;top:143.19px;width:0.60px;height:15.91px;background:#e0e0e0"></div>
<div class="a" style="left:116.90px;top:143.19px;width:0.70px;height:15.91px;background:#e2e2e2"></div>
<div class="a" style="left:270.70px;top:143.19px;width:0.70px;height:15.91px;background:#e2e2e2"></div>
<div class="a" style="left:300.90px;top:143.19px;width:0.70px;height:15.91px;background:#e2e2e2"></div>
<div class="a" style="left:12.50px;top:174.41px;width:47.50px;height:1.30px;background:#858383"></div>
<div class="a" style="left:174.40px;top:174.81px;width:39.40px;height:0.80px;background:#c2bfbf"></div>
<div class="a" style="left:0.00px;top:175.11px;width:12.50px;height:0.80px;background:#e6e6e6"></div>
<div class="a" style="left:60.00px;top:175.11px;width:114.40px;height:0.80px;background:#e6e6e6"></div>
<div class="a" style="left:213.80px;top:175.11px;width:111.10px;height:0.80px;background:#e6e6e6"></div>
<div class="a" style="left:12.00px;top:159.10px;width:0.60px;height:15.91px;background:#e0e0e0"></div>
<div class="a" style="left:60.00px;top:159.10px;width:0.60px;height:15.91px;background:#e0e0e0"></div>
<div class="a" style="left:116.90px;top:159.10px;width:0.70px;height:15.91px;background:#e2e2e2"></div>
<div class="a" style="left:270.70px;top:159.10px;width:0.70px;height:15.91px;background:#e2e2e2"></div>
<div class="a" style="left:300.90px;top:159.10px;width:0.70px;height:15.91px;background:#e2e2e2"></div>
<div class="a" style="left:12.50px;top:190.32px;width:47.50px;height:1.30px;background:#858383"></div>
<div class="a" style="left:174.40px;top:190.72px;width:39.40px;height:0.80px;background:#c2bfbf"></div>
<div class="a" style="left:0.00px;top:191.02px;width:12.50px;height:0.80px;background:#e6e6e6"></div>
<div class="a" style="left:60.00px;top:191.02px;width:114.40px;height:0.80px;background:#e6e6e6"></div>
<div class="a" style="left:213.80px;top:191.02px;width:111.10px;height:0.80px;background:#e6e6e6"></div>
<div class="a" style="left:12.00px;top:175.01px;width:0.60px;height:15.91px;background:#e0e0e0"></div>
<div class="a" style="left:60.00px;top:175.01px;width:0.60px;height:15.91px;background:#e0e0e0"></div>
<div class="a" style="left:116.90px;top:175.01px;width:0.70px;height:15.91px;background:#e2e2e2"></div>
<div class="a" style="left:270.70px;top:175.01px;width:0.70px;height:15.91px;background:#e2e2e2"></div>
<div class="a" style="left:300.90px;top:175.01px;width:0.70px;height:15.91px;background:#e2e2e2"></div>
<div class="a" style="left:12.50px;top:206.23px;width:47.50px;height:1.30px;background:#858383"></div>
<div class="a" style="left:174.40px;top:206.63px;width:39.40px;height:0.80px;background:#c2bfbf"></div>
<div class="a" style="left:0.00px;top:206.93px;width:12.50px;height:0.80px;background:#e6e6e6"></div>
<div class="a" style="left:60.00px;top:206.93px;width:114.40px;height:0.80px;background:#e6e6e6"></div>
<div class="a" style="left:213.80px;top:206.93px;width:111.10px;height:0.80px;background:#e6e6e6"></div>
<div class="a" style="left:12.00px;top:190.92px;width:0.60px;height:15.91px;background:#e0e0e0"></div>
<div class="a" style="left:60.00px;top:190.92px;width:0.60px;height:15.91px;background:#e0e0e0"></div>
<div class="a" style="left:116.90px;top:190.92px;width:0.70px;height:15.91px;background:#e2e2e2"></div>
<div class="a" style="left:270.70px;top:190.92px;width:0.70px;height:15.91px;background:#e2e2e2"></div>
<div class="a" style="left:300.90px;top:190.92px;width:0.70px;height:15.91px;background:#e2e2e2"></div>
<div class="a" style="left:12.50px;top:222.14px;width:47.50px;height:1.30px;background:#858383"></div>
<div class="a" style="left:174.40px;top:222.54px;width:39.40px;height:0.80px;background:#c2bfbf"></div>
<div class="a" style="left:0.00px;top:222.84px;width:12.50px;height:0.80px;background:#e6e6e6"></div>
<div class="a" style="left:60.00px;top:222.84px;width:114.40px;height:0.80px;background:#e6e6e6"></div>
<div class="a" style="left:213.80px;top:222.84px;width:111.10px;height:0.80px;background:#e6e6e6"></div>
<div class="a" style="left:12.00px;top:206.83px;width:0.60px;height:15.91px;background:#e0e0e0"></div>
<div class="a" style="left:60.00px;top:206.83px;width:0.60px;height:15.91px;background:#e0e0e0"></div>
<div class="a" style="left:116.90px;top:206.83px;width:0.70px;height:15.91px;background:#e2e2e2"></div>
<div class="a" style="left:270.70px;top:206.83px;width:0.70px;height:15.91px;background:#e2e2e2"></div>
<div class="a" style="left:300.90px;top:206.83px;width:0.70px;height:15.91px;background:#e2e2e2"></div>
<div class="a" style="left:12.50px;top:238.05px;width:47.50px;height:1.30px;background:#858383"></div>
<div class="a" style="left:174.40px;top:238.45px;width:39.40px;height:0.80px;background:#c2bfbf"></div>
<div class="a" style="left:0.00px;top:238.75px;width:12.50px;height:0.80px;background:#e6e6e6"></div>
<div class="a" style="left:60.00px;top:238.75px;width:114.40px;height:0.80px;background:#e6e6e6"></div>
<div class="a" style="left:213.80px;top:238.75px;width:111.10px;height:0.80px;background:#e6e6e6"></div>
<div class="a" style="left:12.00px;top:222.74px;width:0.60px;height:15.91px;background:#e0e0e0"></div>
<div class="a" style="left:60.00px;top:222.74px;width:0.60px;height:15.91px;background:#e0e0e0"></div>
<div class="a" style="left:116.90px;top:222.74px;width:0.70px;height:15.91px;background:#e2e2e2"></div>
<div class="a" style="left:270.70px;top:222.74px;width:0.70px;height:15.91px;background:#e2e2e2"></div>
<div class="a" style="left:300.90px;top:222.74px;width:0.70px;height:15.91px;background:#e2e2e2"></div>
<div class="a" style="left:12.50px;top:253.96px;width:47.50px;height:1.30px;background:#858383"></div>
<div class="a" style="left:174.40px;top:254.36px;width:39.40px;height:0.80px;background:#c2bfbf"></div>
<div class="a" style="left:0.00px;top:254.66px;width:12.50px;height:0.80px;background:#e6e6e6"></div>
<div class="a" style="left:60.00px;top:254.66px;width:114.40px;height:0.80px;background:#e6e6e6"></div>
<div class="a" style="left:213.80px;top:254.66px;width:111.10px;height:0.80px;background:#e6e6e6"></div>
<div class="a" style="left:12.00px;top:238.65px;width:0.60px;height:15.91px;background:#e0e0e0"></div>
<div class="a" style="left:60.00px;top:238.65px;width:0.60px;height:15.91px;background:#e0e0e0"></div>
<div class="a" style="left:116.90px;top:238.65px;width:0.70px;height:15.91px;background:#e2e2e2"></div>
<div class="a" style="left:270.70px;top:238.65px;width:0.70px;height:15.91px;background:#e2e2e2"></div>
<div class="a" style="left:300.90px;top:238.65px;width:0.70px;height:15.91px;background:#e2e2e2"></div>
<div class="a" style="left:12.50px;top:269.87px;width:47.50px;height:1.30px;background:#858383"></div>
<div class="a" style="left:174.40px;top:270.27px;width:39.40px;height:0.80px;background:#c2bfbf"></div>
<div class="a" style="left:0.00px;top:270.57px;width:12.50px;height:0.80px;background:#e6e6e6"></div>
<div class="a" style="left:60.00px;top:270.57px;width:114.40px;height:0.80px;background:#e6e6e6"></div>
<div class="a" style="left:213.80px;top:270.57px;width:111.10px;height:0.80px;background:#e6e6e6"></div>
<div class="a" style="left:12.00px;top:254.56px;width:0.60px;height:15.91px;background:#e0e0e0"></div>
<div class="a" style="left:60.00px;top:254.56px;width:0.60px;height:15.91px;background:#e0e0e0"></div>
<div class="a" style="left:116.90px;top:254.56px;width:0.70px;height:15.91px;background:#e2e2e2"></div>
<div class="a" style="left:270.70px;top:254.56px;width:0.70px;height:15.91px;background:#e2e2e2"></div>
<div class="a" style="left:300.90px;top:254.56px;width:0.70px;height:15.91px;background:#e2e2e2"></div>
<div class="a" style="left:12.50px;top:285.78px;width:47.50px;height:1.30px;background:#858383"></div>
<div class="a" style="left:174.40px;top:286.18px;width:39.40px;height:0.80px;background:#c2bfbf"></div>
<div class="a" style="left:0.00px;top:286.48px;width:12.50px;height:0.80px;background:#e6e6e6"></div>
<div class="a" style="left:60.00px;top:286.48px;width:114.40px;height:0.80px;background:#e6e6e6"></div>
<div class="a" style="left:213.80px;top:286.48px;width:111.10px;height:0.80px;background:#e6e6e6"></div>
<div class="a" style="left:12.00px;top:270.47px;width:0.60px;height:15.91px;background:#e0e0e0"></div>
<div class="a" style="left:60.00px;top:270.47px;width:0.60px;height:15.91px;background:#e0e0e0"></div>
<div class="a" style="left:116.90px;top:270.47px;width:0.70px;height:15.91px;background:#e2e2e2"></div>
<div class="a" style="left:270.70px;top:270.47px;width:0.70px;height:15.91px;background:#e2e2e2"></div>
<div class="a" style="left:300.90px;top:270.47px;width:0.70px;height:15.91px;background:#e2e2e2"></div>
<div class="a" style="left:12.50px;top:301.69px;width:47.50px;height:1.30px;background:#858383"></div>
<div class="a" style="left:174.40px;top:302.09px;width:39.40px;height:0.80px;background:#c2bfbf"></div>
<div class="a" style="left:0.00px;top:302.39px;width:12.50px;height:0.80px;background:#e6e6e6"></div>
<div class="a" style="left:60.00px;top:302.39px;width:114.40px;height:0.80px;background:#e6e6e6"></div>
<div class="a" style="left:213.80px;top:302.39px;width:111.10px;height:0.80px;background:#e6e6e6"></div>
<div class="a" style="left:12.00px;top:286.38px;width:0.60px;height:15.91px;background:#e0e0e0"></div>
<div class="a" style="left:60.00px;top:286.38px;width:0.60px;height:15.91px;background:#e0e0e0"></div>
<div class="a" style="left:116.90px;top:286.38px;width:0.70px;height:15.91px;background:#e2e2e2"></div>
<div class="a" style="left:270.70px;top:286.38px;width:0.70px;height:15.91px;background:#e2e2e2"></div>
<div class="a" style="left:300.90px;top:286.38px;width:0.70px;height:15.91px;background:#e2e2e2"></div>
<div class="a" style="left:12.50px;top:317.60px;width:47.50px;height:1.30px;background:#858383"></div>
<div class="a" style="left:174.40px;top:318.00px;width:39.40px;height:0.80px;background:#c2bfbf"></div>
<div class="a" style="left:0.00px;top:318.30px;width:12.50px;height:0.80px;background:#e6e6e6"></div>
<div class="a" style="left:60.00px;top:318.30px;width:114.40px;height:0.80px;background:#e6e6e6"></div>
<div class="a" style="left:213.80px;top:318.30px;width:111.10px;height:0.80px;background:#e6e6e6"></div>
<div class="a" style="left:12.00px;top:302.29px;width:0.60px;height:15.91px;background:#e0e0e0"></div>
<div class="a" style="left:60.00px;top:302.29px;width:0.60px;height:15.91px;background:#e0e0e0"></div>
<div class="a" style="left:116.90px;top:302.29px;width:0.70px;height:15.91px;background:#e2e2e2"></div>
<div class="a" style="left:270.70px;top:302.29px;width:0.70px;height:15.91px;background:#e2e2e2"></div>
<div class="a" style="left:300.90px;top:302.29px;width:0.70px;height:15.91px;background:#e2e2e2"></div>
<div class="a" style="left:12.50px;top:333.51px;width:47.50px;height:1.30px;background:#858383"></div>
<div class="a" style="left:174.40px;top:333.91px;width:39.40px;height:0.80px;background:#c2bfbf"></div>
<div class="a" style="left:0.00px;top:334.21px;width:12.50px;height:0.80px;background:#e6e6e6"></div>
<div class="a" style="left:60.00px;top:334.21px;width:114.40px;height:0.80px;background:#e6e6e6"></div>
<div class="a" style="left:213.80px;top:334.21px;width:111.10px;height:0.80px;background:#e6e6e6"></div>
<div class="a" style="left:12.00px;top:318.20px;width:0.60px;height:15.91px;background:#e0e0e0"></div>
<div class="a" style="left:60.00px;top:318.20px;width:0.60px;height:15.91px;background:#e0e0e0"></div>
<div class="a" style="left:116.90px;top:318.20px;width:0.70px;height:15.91px;background:#e2e2e2"></div>
<div class="a" style="left:270.70px;top:318.20px;width:0.70px;height:15.91px;background:#e2e2e2"></div>
<div class="a" style="left:300.90px;top:318.20px;width:0.70px;height:15.91px;background:#e2e2e2"></div>
<div class="a" style="left:12.50px;top:349.42px;width:47.50px;height:1.30px;background:#858383"></div>
<div class="a" style="left:174.40px;top:349.82px;width:39.40px;height:0.80px;background:#c2bfbf"></div>
<div class="a" style="left:0.00px;top:350.12px;width:12.50px;height:0.80px;background:#e6e6e6"></div>
<div class="a" style="left:60.00px;top:350.12px;width:114.40px;height:0.80px;background:#e6e6e6"></div>
<div class="a" style="left:213.80px;top:350.12px;width:111.10px;height:0.80px;background:#e6e6e6"></div>
<div class="a" style="left:12.00px;top:334.11px;width:0.60px;height:15.91px;background:#e0e0e0"></div>
<div class="a" style="left:60.00px;top:334.11px;width:0.60px;height:15.91px;background:#e0e0e0"></div>
<div class="a" style="left:116.90px;top:334.11px;width:0.70px;height:15.91px;background:#e2e2e2"></div>
<div class="a" style="left:270.70px;top:334.11px;width:0.70px;height:15.91px;background:#e2e2e2"></div>
<div class="a" style="left:300.90px;top:334.11px;width:0.70px;height:15.91px;background:#e2e2e2"></div>
<div class="a" style="left:12.50px;top:365.33px;width:47.50px;height:1.30px;background:#858383"></div>
<div class="a" style="left:174.40px;top:365.73px;width:39.40px;height:0.80px;background:#c2bfbf"></div>
<div class="a" style="left:0.00px;top:366.03px;width:12.50px;height:0.80px;background:#e6e6e6"></div>
<div class="a" style="left:60.00px;top:366.03px;width:114.40px;height:0.80px;background:#e6e6e6"></div>
<div class="a" style="left:213.80px;top:366.03px;width:111.10px;height:0.80px;background:#e6e6e6"></div>
<div class="a" style="left:12.00px;top:350.02px;width:0.60px;height:15.91px;background:#e0e0e0"></div>
<div class="a" style="left:60.00px;top:350.02px;width:0.60px;height:15.91px;background:#e0e0e0"></div>
<div class="a" style="left:116.90px;top:350.02px;width:0.70px;height:15.91px;background:#e2e2e2"></div>
<div class="a" style="left:270.70px;top:350.02px;width:0.70px;height:15.91px;background:#e2e2e2"></div>
<div class="a" style="left:300.90px;top:350.02px;width:0.70px;height:15.91px;background:#e2e2e2"></div>
<div class="a" style="left:12.50px;top:381.24px;width:47.50px;height:1.30px;background:#858383"></div>
<div class="a" style="left:174.40px;top:381.64px;width:39.40px;height:0.80px;background:#c2bfbf"></div>
<div class="a" style="left:0.00px;top:381.94px;width:12.50px;height:0.80px;background:#e6e6e6"></div>
<div class="a" style="left:60.00px;top:381.94px;width:114.40px;height:0.80px;background:#e6e6e6"></div>
<div class="a" style="left:213.80px;top:381.94px;width:111.10px;height:0.80px;background:#e6e6e6"></div>
<div class="a" style="left:12.00px;top:365.93px;width:0.60px;height:15.91px;background:#e0e0e0"></div>
<div class="a" style="left:60.00px;top:365.93px;width:0.60px;height:15.91px;background:#e0e0e0"></div>
<div class="a" style="left:116.90px;top:365.93px;width:0.70px;height:15.91px;background:#e2e2e2"></div>
<div class="a" style="left:270.70px;top:365.93px;width:0.70px;height:15.91px;background:#e2e2e2"></div>
<div class="a" style="left:300.90px;top:365.93px;width:0.70px;height:15.91px;background:#e2e2e2"></div>
<div class="a" style="left:3.00px;top:5.00px;width:6.00px;height:6.20px;background:#fff;border:1px solid #bdbdbd;box-sizing:border-box"></div>
<svg class="a" style="left:3.00px;top:5.00px" width="6.0" height="6.2" viewBox="0 0 6.0 6.2"><path d="M1.3 3.2 L2.6 4.6 L4.9 1.2" fill="none" stroke="#666" stroke-width=".8"/></svg>
<div class="t" style="left:62.20px;top:4.93px;font-size:6.2px;transform:scaleX(0.73);color:#3e3e3e;font-weight:normal">Rai 1</div>
<div class="t" style="left:176.20px;top:5.10px;font-size:6.0px;transform:scaleX(0.68);color:#2e2e2e;font-weight:bold">AUDITEL</div>
<div class="t" style="left:215.60px;top:4.93px;font-size:6.2px;transform:scaleX(0.73);color:#3e3e3e;font-weight:normal">Rai Pubblicità S.p.A.</div>
<div class="t" style="left:272.80px;top:4.93px;font-size:6.2px;transform:scaleX(0.77);color:#3e3e3e;font-weight:normal">28/12/1997</div>
<div class="t" style="left:302.80px;top:4.93px;font-size:6.2px;transform:scaleX(0.77);color:#3e3e3e;font-weight:normal">19/12/201</div>
<svg class="a" style="left:15.60px;top:3.30px" width="19" height="11" viewBox="0 0 19 11"><rect x="0" y="0.4" width="9.6" height="10" fill="#1a3ca8"/><rect x="9.8" y="0.4" width="8.6" height="10" fill="#fff"/><text x="0.9" y="7.7" font-family="Liberation Sans" font-weight="bold" font-size="6.3" fill="#fff" stroke="#fff" stroke-width=".25" textLength="8.2" lengthAdjust="spacingAndGlyphs">Rai</text><text x="11.3" y="9.9" font-family="Liberation Sans" font-weight="bold" font-size="11.5" fill="#1a3ca8" stroke="#1a3ca8" stroke-width=".3" textLength="5.4" lengthAdjust="spacingAndGlyphs">1</text></svg>
<div class="a" style="left:3.00px;top:20.91px;width:6.00px;height:6.20px;background:#fff;border:1px solid #bdbdbd;box-sizing:border-box"></div>
<svg class="a" style="left:3.00px;top:20.91px" width="6.0" height="6.2" viewBox="0 0 6.0 6.2"><path d="M1.3 3.2 L2.6 4.6 L4.9 1.2" fill="none" stroke="#666" stroke-width=".8"/></svg>
<div class="t" style="left:62.20px;top:20.84px;font-size:6.2px;transform:scaleX(0.73);color:#3e3e3e;font-weight:normal">Rai 2</div>
<div class="t" style="left:176.20px;top:21.01px;font-size:6.0px;transform:scaleX(0.68);color:#2e2e2e;font-weight:bold">AUDITEL</div>
<div class="t" style="left:215.60px;top:20.84px;font-size:6.2px;transform:scaleX(0.73);color:#3e3e3e;font-weight:normal">Rai Pubblicità S.p.A.</div>
<div class="t" style="left:272.80px;top:20.84px;font-size:6.2px;transform:scaleX(0.77);color:#3e3e3e;font-weight:normal">28/12/1997</div>
<div class="t" style="left:302.80px;top:20.84px;font-size:6.2px;transform:scaleX(0.77);color:#3e3e3e;font-weight:normal">19/12/201</div>
<svg class="a" style="left:15.60px;top:19.21px" width="19" height="11" viewBox="0 0 19 11"><rect x="0" y="0.4" width="9.6" height="10" fill="#d8231a"/><rect x="9.8" y="0.4" width="8.6" height="10" fill="#fff"/><text x="0.9" y="7.7" font-family="Liberation Sans" font-weight="bold" font-size="6.3" fill="#fff" stroke="#fff" stroke-width=".25" textLength="8.2" lengthAdjust="spacingAndGlyphs">Rai</text><text x="11.3" y="9.9" font-family="Liberation Sans" font-weight="bold" font-size="11.5" fill="#d8231a" stroke="#d8231a" stroke-width=".3" textLength="5.4" lengthAdjust="spacingAndGlyphs">2</text></svg>
<div class="a" style="left:3.00px;top:36.82px;width:6.00px;height:6.20px;background:#fff;border:1px solid #bdbdbd;box-sizing:border-box"></div>
<svg class="a" style="left:3.00px;top:36.82px" width="6.0" height="6.2" viewBox="0 0 6.0 6.2"><path d="M1.3 3.2 L2.6 4.6 L4.9 1.2" fill="none" stroke="#666" stroke-width=".8"/></svg>
<div class="t" style="left:62.20px;top:36.75px;font-size:6.2px;transform:scaleX(0.73);color:#3e3e3e;font-weight:normal">Rai 3</div>
<div class="t" style="left:176.20px;top:36.92px;font-size:6.0px;transform:scaleX(0.68);color:#2e2e2e;font-weight:bold">AUDITEL</div>
<div class="t" style="left:215.60px;top:36.75px;font-size:6.2px;transform:scaleX(0.73);color:#3e3e3e;font-weight:normal">Rai Pubblicità S.p.A.</div>
<div class="t" style="left:272.80px;top:36.75px;font-size:6.2px;transform:scaleX(0.77);color:#3e3e3e;font-weight:normal">28/12/1997</div>
<div class="t" style="left:302.80px;top:36.75px;font-size:6.2px;transform:scaleX(0.77);color:#3e3e3e;font-weight:normal">19/12/201</div>
<svg class="a" style="left:15.60px;top:35.12px" width="19" height="11" viewBox="0 0 19 11"><rect x="0" y="0.4" width="9.6" height="10" fill="#1c9a2c"/><rect x="9.8" y="0.4" width="8.6" height="10" fill="#fff"/><text x="0.9" y="7.7" font-family="Liberation Sans" font-weight="bold" font-size="6.3" fill="#fff" stroke="#fff" stroke-width=".25" textLength="8.2" lengthAdjust="spacingAndGlyphs">Rai</text><text x="11.3" y="9.9" font-family="Liberation Sans" font-weight="bold" font-size="11.5" fill="#1c9a2c" stroke="#1c9a2c" stroke-width=".3" textLength="5.4" lengthAdjust="spacingAndGlyphs">3</text></svg>
<div class="a" style="left:3.00px;top:52.73px;width:6.00px;height:6.20px;background:#fff;border:1px solid #bdbdbd;box-sizing:border-box"></div>
<svg class="a" style="left:3.00px;top:52.73px" width="6.0" height="6.2" viewBox="0 0 6.0 6.2"><path d="M1.3 3.2 L2.6 4.6 L4.9 1.2" fill="none" stroke="#666" stroke-width=".8"/></svg>
<div class="t" style="left:62.20px;top:52.66px;font-size:6.2px;transform:scaleX(0.73);color:#3e3e3e;font-weight:normal">Canale 5</div>
<div class="t" style="left:176.20px;top:52.83px;font-size:6.0px;transform:scaleX(0.68);color:#2e2e2e;font-weight:bold">AUDITEL</div>
<div class="t" style="left:215.60px;top:52.66px;font-size:6.2px;transform:scaleX(0.73);color:#3e3e3e;font-weight:normal">Publitalia 80</div>
<div class="t" style="left:272.80px;top:52.66px;font-size:6.2px;transform:scaleX(0.77);color:#3e3e3e;font-weight:normal">28/12/1997</div>
<div class="t" style="left:302.80px;top:52.66px;font-size:6.2px;transform:scaleX(0.77);color:#3e3e3e;font-weight:normal">19/12/201</div>
<svg class="a" style="left:15.60px;top:50.03px" width="11" height="9" viewBox="0 0 11 9"><circle cx="0.9" cy="1.4" r=".8" fill="#fff"/><path d="M2.3 0.4 H9.8 V2.4 H5 V3.6 C8.8 3 10.2 4.6 10 6 C9.8 8.3 7.5 8.9 4.8 8.6 L2.3 8.2 V6.3 C4.8 6.9 7.2 6.9 7.3 6 C7.3 5 5 4.9 2.3 5.4 Z" fill="#fff"/><path d="M4 0.4 V2.4 M6 0.4 V2.4 M8 0.4 V2.4" stroke="#2d2b2b" stroke-width=".35"/></svg>
<div class="a" style="left:3.00px;top:68.64px;width:6.00px;height:6.20px;background:#fff;border:1px solid #bdbdbd;box-sizing:border-box"></div>
<svg class="a" style="left:3.00px;top:68.64px" width="6.0" height="6.2" viewBox="0 0 6.0 6.2"><path d="M1.3 3.2 L2.6 4.6 L4.9 1.2" fill="none" stroke="#666" stroke-width=".8"/></svg>
<div class="t" style="left:62.20px;top:68.57px;font-size:6.2px;transform:scaleX(0.73);color:#3e3e3e;font-weight:normal">Italia 1</div>
<div class="t" style="left:176.20px;top:68.74px;font-size:6.0px;transform:scaleX(0.68);color:#2e2e2e;font-weight:bold">AUDITEL</div>
<div class="t" style="left:215.60px;top:68.57px;font-size:6.2px;transform:scaleX(0.73);color:#3e3e3e;font-weight:normal">Publitalia 80</div>
<div class="t" style="left:272.80px;top:68.57px;font-size:6.2px;transform:scaleX(0.77);color:#3e3e3e;font-weight:normal">28/12/1997</div>
<div class="t" style="left:302.80px;top:68.57px;font-size:6.2px;transform:scaleX(0.77);color:#3e3e3e;font-weight:normal">19/12/201</div>
<svg class="a" style="left:15.60px;top:65.64px" width="11" height="11.5" viewBox="0 0 11 11.5"><path d="M5.2 0.6 L10.3 5.7 L5.2 10.8 L0.4 5.7 Z" fill="none" stroke="#f4f4f4" stroke-width="1"/><path d="M4.3 3.8 L5.6 3.2 V8.4" fill="none" stroke="#ddd" stroke-width=".9"/></svg>
<div class="a" style="left:3.00px;top:84.55px;width:6.00px;height:6.20px;background:#fff;border:1px solid #bdbdbd;box-sizing:border-box"></div>
<svg class="a" style="left:3.00px;top:84.55px" width="6.0" height="6.2" viewBox="0 0 6.0 6.2"><path d="M1.3 3.2 L2.6 4.6 L4.9 1.2" fill="none" stroke="#666" stroke-width=".8"/></svg>
<div class="t" style="left:62.20px;top:84.48px;font-size:6.2px;transform:scaleX(0.73);color:#3e3e3e;font-weight:normal">Retequattro</div>
<div class="t" style="left:176.20px;top:84.65px;font-size:6.0px;transform:scaleX(0.68);color:#2e2e2e;font-weight:bold">AUDITEL</div>
<div class="t" style="left:215.60px;top:84.48px;font-size:6.2px;transform:scaleX(0.73);color:#3e3e3e;font-weight:normal">Publitalia 80</div>
<div class="t" style="left:272.80px;top:84.48px;font-size:6.2px;transform:scaleX(0.77);color:#3e3e3e;font-weight:normal">28/12/1997</div>
<div class="t" style="left:302.80px;top:84.48px;font-size:6.2px;transform:scaleX(0.77);color:#3e3e3e;font-weight:normal">19/12/201</div>
<svg class="a" style="left:15.60px;top:82.45px" width="9.5" height="9" viewBox="0 0 9.5 9"><path d="M0.3 3 C0.3 0.6 2 0.2 4.5 0.2 C7.5 0.2 8.8 0.8 8.8 3 V5.5 C8.8 6.8 9.2 7.6 8.2 8.6 H5.6 L4.6 7.6 L3.6 8.6 H1 C0 7.6 0.3 6.6 0.3 5.5 Z" fill="#fff"/><path d="M5.2 1.8 L2.2 5.3 H6.6 M5.2 1.8 V6.8" fill="none" stroke="#2d2b2b" stroke-width="1.1"/></svg>
<div class="a" style="left:3.00px;top:100.46px;width:6.00px;height:6.20px;background:#fff;border:1px solid #bdbdbd;box-sizing:border-box"></div>
<div class="t" style="left:62.20px;top:100.39px;font-size:6.2px;transform:scaleX(0.73);color:#3e3e3e;font-weight:normal">7 Gold</div>
<div class="t" style="left:176.20px;top:100.56px;font-size:6.0px;transform:scaleX(0.68);color:#2e2e2e;font-weight:bold">AUDITEL</div>
<div class="t" style="left:215.60px;top:100.39px;font-size:6.2px;transform:scaleX(0.73);color:#3e3e3e;font-weight:normal">P.R.S. S.r.l.</div>
<div class="t" style="left:272.80px;top:100.39px;font-size:6.2px;transform:scaleX(0.77);color:#3e3e3e;font-weight:normal">01/01/2006</div>
<div class="t" style="left:302.80px;top:100.39px;font-size:6.2px;transform:scaleX(0.77);color:#3e3e3e;font-weight:normal">19/12/201</div>
<svg class="a" style="left:15.40px;top:97.76px" width="11" height="10.5" viewBox="0 0 11 10.5"><path d="M2 0.3 H9.8 V2.2 L6.2 10.2 H3.8 L7.2 2.6 H2 Z" fill="#f2b700"/><path d="M1.2 6.3 H9.6" stroke="#e8a800" stroke-width="1"/><circle cx="0.8" cy="6.6" r=".8" fill="#f6d040"/><circle cx="10.2" cy="6.6" r=".8" fill="#f6d040"/></svg>
<div class="a" style="left:3.00px;top:116.37px;width:6.00px;height:6.20px;background:#fff;border:1px solid #bdbdbd;box-sizing:border-box"></div>
<div class="t" style="left:62.20px;top:116.30px;font-size:6.2px;transform:scaleX(0.73);color:#3e3e3e;font-weight:normal">La7</div>
<div class="t" style="left:176.20px;top:116.47px;font-size:6.0px;transform:scaleX(0.68);color:#2e2e2e;font-weight:bold">AUDITEL</div>
<div class="t" style="left:215.60px;top:116.30px;font-size:6.2px;transform:scaleX(0.73);color:#3e3e3e;font-weight:normal">Cairo Pubblicità S.p.A.</div>
<div class="t" style="left:272.80px;top:116.30px;font-size:6.2px;transform:scaleX(0.77);color:#3e3e3e;font-weight:normal">28/12/1997</div>
<div class="t" style="left:302.80px;top:116.30px;font-size:6.2px;transform:scaleX(0.77);color:#3e3e3e;font-weight:normal">19/12/201</div>
<svg class="a" style="left:15.60px;top:113.37px" width="13.5" height="11" viewBox="0 0 13.5 11"><path d="M12.8 0.2 V10.8 H5.8 Z" fill="#f0c020"/><path d="M3 0.6 H10.2 V2.6 L6.6 9.4 H4.4 L7.6 2.8 H3 Z" fill="#fff"/><text x="0" y="6.5" font-family="Liberation Sans" font-size="2.8" fill="#ddd">La</text></svg>
<div class="a" style="left:3.00px;top:132.28px;width:6.00px;height:6.20px;background:#fff;border:1px solid #bdbdbd;box-sizing:border-box"></div>
<div class="t" style="left:62.20px;top:132.21px;font-size:6.2px;transform:scaleX(0.73);color:#3e3e3e;font-weight:normal">Telecupole</div>
<div class="t" style="left:176.20px;top:132.38px;font-size:6.0px;transform:scaleX(0.68);color:#2e2e2e;font-weight:bold">AUDITEL</div>
<div class="t" style="left:215.60px;top:132.21px;font-size:6.2px;transform:scaleX(0.73);color:#3e3e3e;font-weight:normal">P.R.S. S.r.l.</div>
<div class="t" style="left:272.80px;top:132.21px;font-size:6.2px;transform:scaleX(0.77);color:#3e3e3e;font-weight:normal">31/07/2004</div>
<div class="t" style="left:302.80px;top:132.21px;font-size:6.2px;transform:scaleX(0.77);color:#3e3e3e;font-weight:normal">19/12/201</div>
<div class="a" style="left:3.00px;top:148.19px;width:6.00px;height:6.20px;background:#fff;border:1px solid #bdbdbd;box-sizing:border-box"></div>
<div class="t" style="left:62.20px;top:148.12px;font-size:6.2px;transform:scaleX(0.73);color:#3e3e3e;font-weight:normal">Music on Sky</div>
<div class="t" style="left:176.20px;top:148.29px;font-size:6.0px;transform:scaleX(0.68);color:#2e2e2e;font-weight:bold">AUDITEL</div>
<div class="t" style="left:215.60px;top:148.12px;font-size:6.2px;transform:scaleX(0.73);color:#3e3e3e;font-weight:normal">Sky Italia S.r.l.</div>
<div class="t" style="left:272.80px;top:148.12px;font-size:6.2px;transform:scaleX(0.77);color:#3e3e3e;font-weight:normal">29/03/2009</div>
<div class="t" style="left:302.80px;top:148.12px;font-size:6.2px;transform:scaleX(0.77);color:#3e3e3e;font-weight:normal">19/12/201</div>
<div class="a" style="left:3.00px;top:164.10px;width:6.00px;height:6.20px;background:#fff;border:1px solid #bdbdbd;box-sizing:border-box"></div>
<div class="t" style="left:62.20px;top:164.03px;font-size:6.2px;transform:scaleX(0.73);color:#3e3e3e;font-weight:normal">Videogruppo</div>
<div class="t" style="left:176.20px;top:164.20px;font-size:6.0px;transform:scaleX(0.68);color:#2e2e2e;font-weight:bold">AUDITEL</div>
<div class="t" style="left:215.60px;top:164.03px;font-size:6.2px;transform:scaleX(0.73);color:#3e3e3e;font-weight:normal">Sport Network S.r.l.</div>
<div class="t" style="left:272.80px;top:164.03px;font-size:6.2px;transform:scaleX(0.77);color:#3e3e3e;font-weight:normal">27/02/2011</div>
<div class="t" style="left:302.80px;top:164.03px;font-size:6.2px;transform:scaleX(0.77);color:#3e3e3e;font-weight:normal">19/12/201</div>
<div class="a" style="left:3.00px;top:180.01px;width:6.00px;height:6.20px;background:#fff;border:1px solid #bdbdbd;box-sizing:border-box"></div>
<div class="t" style="left:62.20px;top:179.94px;font-size:6.2px;transform:scaleX(0.73);color:#3e3e3e;font-weight:normal">Antenna 3</div>
<div class="t" style="left:176.20px;top:180.11px;font-size:6.0px;transform:scaleX(0.68);color:#2e2e2e;font-weight:bold">AUDITEL</div>
<div class="t" style="left:215.60px;top:179.94px;font-size:6.2px;transform:scaleX(0.73);color:#3e3e3e;font-weight:normal">P.R.S. S.r.l.</div>
<div class="t" style="left:272.80px;top:179.94px;font-size:6.2px;transform:scaleX(0.77);color:#3e3e3e;font-weight:normal">31/07/2004</div>
<div class="t" style="left:302.80px;top:179.94px;font-size:6.2px;transform:scaleX(0.77);color:#3e3e3e;font-weight:normal">19/12/201</div>
<div class="a" style="left:3.00px;top:195.92px;width:6.00px;height:6.20px;background:#fff;border:1px solid #bdbdbd;box-sizing:border-box"></div>
<div class="t" style="left:62.20px;top:195.85px;font-size:6.2px;transform:scaleX(0.73);color:#3e3e3e;font-weight:normal">Espansione Tv</div>
<div class="t" style="left:176.20px;top:196.02px;font-size:6.0px;transform:scaleX(0.68);color:#2e2e2e;font-weight:bold">AUDITEL</div>
<div class="t" style="left:215.60px;top:195.85px;font-size:6.2px;transform:scaleX(0.73);color:#3e3e3e;font-weight:normal">P.R.S. S.r.l.</div>
<div class="t" style="left:272.80px;top:195.85px;font-size:6.2px;transform:scaleX(0.77);color:#3e3e3e;font-weight:normal">30/10/2005</div>
<div class="t" style="left:302.80px;top:195.85px;font-size:6.2px;transform:scaleX(0.77);color:#3e3e3e;font-weight:normal">19/12/201</div>
<div class="a" style="left:3.00px;top:211.83px;width:6.00px;height:6.20px;background:#fff;border:1px solid #bdbdbd;box-sizing:border-box"></div>
<div class="t" style="left:62.20px;top:211.76px;font-size:6.2px;transform:scaleX(0.73);color:#3e3e3e;font-weight:normal">Telelombardia</div>
<div class="t" style="left:176.20px;top:211.93px;font-size:6.0px;transform:scaleX(0.68);color:#2e2e2e;font-weight:bold">AUDITEL</div>
<div class="t" style="left:215.60px;top:211.76px;font-size:6.2px;transform:scaleX(0.73);color:#3e3e3e;font-weight:normal">Sport Network S.r.l.</div>
<div class="t" style="left:272.80px;top:211.76px;font-size:6.2px;transform:scaleX(0.77);color:#3e3e3e;font-weight:normal">31/07/2004</div>
<div class="t" style="left:302.80px;top:211.76px;font-size:6.2px;transform:scaleX(0.77);color:#3e3e3e;font-weight:normal">19/12/201</div>
<div class="a" style="left:3.00px;top:227.74px;width:6.00px;height:6.20px;background:#fff;border:1px solid #bdbdbd;box-sizing:border-box"></div>
<div class="t" style="left:62.20px;top:227.67px;font-size:6.2px;transform:scaleX(0.73);color:#3e3e3e;font-weight:normal">Telenova</div>
<div class="t" style="left:176.20px;top:227.84px;font-size:6.0px;transform:scaleX(0.68);color:#2e2e2e;font-weight:bold">AUDITEL</div>
<div class="t" style="left:215.60px;top:227.67px;font-size:6.2px;transform:scaleX(0.73);color:#3e3e3e;font-weight:normal">P.R.S. S.r.l.</div>
<div class="t" style="left:272.80px;top:227.67px;font-size:6.2px;transform:scaleX(0.77);color:#3e3e3e;font-weight:normal">31/07/2004</div>
<div class="t" style="left:302.80px;top:227.67px;font-size:6.2px;transform:scaleX(0.77);color:#3e3e3e;font-weight:normal">19/12/201</div>
<div class="a" style="left:3.00px;top:243.65px;width:6.00px;height:6.20px;background:#fff;border:1px solid #bdbdbd;box-sizing:border-box"></div>
<div class="t" style="left:62.20px;top:243.58px;font-size:6.2px;transform:scaleX(0.73);color:#3e3e3e;font-weight:normal">7 Gold Tele Padova</div>
<div class="t" style="left:176.20px;top:243.75px;font-size:6.0px;transform:scaleX(0.68);color:#2e2e2e;font-weight:bold">AUDITEL</div>
<div class="t" style="left:215.60px;top:243.58px;font-size:6.2px;transform:scaleX(0.73);color:#3e3e3e;font-weight:normal">P.R.S. S.r.l.</div>
<div class="t" style="left:272.80px;top:243.58px;font-size:6.2px;transform:scaleX(0.77);color:#3e3e3e;font-weight:normal">31/07/2004</div>
<div class="t" style="left:302.80px;top:243.58px;font-size:6.2px;transform:scaleX(0.77);color:#3e3e3e;font-weight:normal">19/12/201</div>
<div class="a" style="left:3.00px;top:259.56px;width:6.00px;height:6.20px;background:#fff;border:1px solid #bdbdbd;box-sizing:border-box"></div>
<div class="t" style="left:62.20px;top:259.49px;font-size:6.2px;transform:scaleX(0.73);color:#3e3e3e;font-weight:normal">ALTRE SAT</div>
<div class="t" style="left:176.20px;top:259.66px;font-size:6.0px;transform:scaleX(0.68);color:#2e2e2e;font-weight:bold">AUDITEL</div>
<div class="t" style="left:215.60px;top:259.49px;font-size:6.2px;transform:scaleX(0.73);color:#3e3e3e;font-weight:normal">Non indicato</div>
<div class="t" style="left:272.80px;top:259.49px;font-size:6.2px;transform:scaleX(0.77);color:#3e3e3e;font-weight:normal">12/12/2017</div>
<div class="t" style="left:302.80px;top:259.49px;font-size:6.2px;transform:scaleX(0.77);color:#3e3e3e;font-weight:normal">18/12/201</div>
<div class="a" style="left:3.00px;top:275.47px;width:6.00px;height:6.20px;background:#fff;border:1px solid #bdbdbd;box-sizing:border-box"></div>
<div class="t" style="left:62.20px;top:275.40px;font-size:6.2px;transform:scaleX(0.73);color:#3e3e3e;font-weight:normal">ALTRE DIGITALI TERR...</div>
<div class="t" style="left:176.20px;top:275.57px;font-size:6.0px;transform:scaleX(0.68);color:#2e2e2e;font-weight:bold">AUDITEL</div>
<div class="t" style="left:215.60px;top:275.40px;font-size:6.2px;transform:scaleX(0.73);color:#3e3e3e;font-weight:normal">Non indicato</div>
<div class="t" style="left:272.80px;top:275.40px;font-size:6.2px;transform:scaleX(0.77);color:#3e3e3e;font-weight:normal">12/12/2017</div>
<div class="t" style="left:302.80px;top:275.40px;font-size:6.2px;transform:scaleX(0.77);color:#3e3e3e;font-weight:normal">18/12/201</div>
<div class="a" style="left:3.00px;top:291.38px;width:6.00px;height:6.20px;background:#fff;border:1px solid #bdbdbd;box-sizing:border-box"></div>
<div class="t" style="left:62.20px;top:291.31px;font-size:6.2px;transform:scaleX(0.73);color:#3e3e3e;font-weight:normal">Videolina</div>
<div class="t" style="left:176.20px;top:291.48px;font-size:6.0px;transform:scaleX(0.68);color:#2e2e2e;font-weight:bold">AUDITEL</div>
<div class="t" style="left:215.60px;top:291.31px;font-size:6.2px;transform:scaleX(0.73);color:#3e3e3e;font-weight:normal">Sport Network S.r.l.</div>
<div class="t" style="left:272.80px;top:291.31px;font-size:6.2px;transform:scaleX(0.77);color:#3e3e3e;font-weight:normal">31/07/2004</div>
<div class="t" style="left:302.80px;top:291.31px;font-size:6.2px;transform:scaleX(0.77);color:#3e3e3e;font-weight:normal">19/12/201</div>
<div class="a" style="left:3.00px;top:307.29px;width:6.00px;height:6.20px;background:#fff;border:1px solid #bdbdbd;box-sizing:border-box"></div>
<div class="t" style="left:62.20px;top:307.22px;font-size:6.2px;transform:scaleX(0.73);color:#3e3e3e;font-weight:normal">A3</div>
<div class="t" style="left:176.20px;top:307.39px;font-size:6.0px;transform:scaleX(0.68);color:#2e2e2e;font-weight:bold">AUDITEL</div>
<div class="t" style="left:215.60px;top:307.22px;font-size:6.2px;transform:scaleX(0.73);color:#3e3e3e;font-weight:normal">Antenna Tre Nord Est ...</div>
<div class="t" style="left:272.80px;top:307.22px;font-size:6.2px;transform:scaleX(0.77);color:#3e3e3e;font-weight:normal">29/10/2006</div>
<div class="t" style="left:302.80px;top:307.22px;font-size:6.2px;transform:scaleX(0.77);color:#3e3e3e;font-weight:normal">19/12/201</div>
<div class="a" style="left:3.00px;top:323.20px;width:6.00px;height:6.20px;background:#fff;border:1px solid #bdbdbd;box-sizing:border-box"></div>
<div class="t" style="left:62.20px;top:323.13px;font-size:6.2px;transform:scaleX(0.73);color:#3e3e3e;font-weight:normal">Canale Italia 83 (LOCA...</div>
<div class="t" style="left:176.20px;top:323.30px;font-size:6.0px;transform:scaleX(0.68);color:#2e2e2e;font-weight:bold">AUDITEL</div>
<div class="t" style="left:215.60px;top:323.13px;font-size:6.2px;transform:scaleX(0.73);color:#3e3e3e;font-weight:normal">Canale Italia S.r.l.</div>
<div class="t" style="left:272.80px;top:323.13px;font-size:6.2px;transform:scaleX(0.77);color:#3e3e3e;font-weight:normal">31/07/2004</div>
<div class="t" style="left:302.80px;top:323.13px;font-size:6.2px;transform:scaleX(0.77);color:#3e3e3e;font-weight:normal">19/12/201</div>
<div class="a" style="left:3.00px;top:339.11px;width:6.00px;height:6.20px;background:#fff;border:1px solid #bdbdbd;box-sizing:border-box"></div>
<div class="t" style="left:62.20px;top:339.04px;font-size:6.2px;transform:scaleX(0.73);color:#3e3e3e;font-weight:normal">Telequattro</div>
<div class="t" style="left:176.20px;top:339.21px;font-size:6.0px;transform:scaleX(0.68);color:#2e2e2e;font-weight:bold">AUDITEL</div>
<div class="t" style="left:215.60px;top:339.04px;font-size:6.2px;transform:scaleX(0.73);color:#3e3e3e;font-weight:normal">Sport Network S.r.l.</div>
<div class="t" style="left:272.80px;top:339.04px;font-size:6.2px;transform:scaleX(0.77);color:#3e3e3e;font-weight:normal">31/07/2004</div>
<div class="t" style="left:302.80px;top:339.04px;font-size:6.2px;transform:scaleX(0.77);color:#3e3e3e;font-weight:normal">19/12/201</div>
<div class="a" style="left:3.00px;top:355.02px;width:6.00px;height:6.20px;background:#fff;border:1px solid #bdbdbd;box-sizing:border-box"></div>
<div class="t" style="left:62.20px;top:354.95px;font-size:6.2px;transform:scaleX(0.73);color:#3e3e3e;font-weight:normal">Tv Centro Marche</div>
<div class="t" style="left:176.20px;top:355.12px;font-size:6.0px;transform:scaleX(0.68);color:#2e2e2e;font-weight:bold">AUDITEL</div>
<div class="t" style="left:215.60px;top:354.95px;font-size:6.2px;transform:scaleX(0.73);color:#3e3e3e;font-weight:normal">Sport Network S.r.l.</div>
<div class="t" style="left:272.80px;top:354.95px;font-size:6.2px;transform:scaleX(0.77);color:#3e3e3e;font-weight:normal">31/07/2004</div>
<div class="t" style="left:302.80px;top:354.95px;font-size:6.2px;transform:scaleX(0.77);color:#3e3e3e;font-weight:normal">19/12/201</div>
<div class="a" style="left:3.00px;top:370.93px;width:6.00px;height:6.20px;background:#fff;border:1px solid #bdbdbd;box-sizing:border-box"></div>
<div class="t" style="left:62.20px;top:370.86px;font-size:6.2px;transform:scaleX(0.73);color:#3e3e3e;font-weight:normal">Canale 9 Napoli</div>
<div class="t" style="left:176.20px;top:371.03px;font-size:6.0px;transform:scaleX(0.68);color:#2e2e2e;font-weight:bold">AUDITEL</div>
<div class="t" style="left:215.60px;top:370.86px;font-size:6.2px;transform:scaleX(0.73);color:#3e3e3e;font-weight:normal">P.R.S. S.r.l.</div>
<div class="t" style="left:272.80px;top:370.86px;font-size:6.2px;transform:scaleX(0.77);color:#3e3e3e;font-weight:normal">31/07/2004</div>
<div class="t" style="left:302.80px;top:370.86px;font-size:6.2px;transform:scaleX(0.77);color:#3e3e3e;font-weight:normal">19/12/201</div>
</div>
<div class="a" style="left:522.30px;top:148.40px;width:6.80px;height:393.10px;background:#ececec"></div>
<div class="a" style="left:522.30px;top:156.90px;width:6.80px;height:37.50px;background:#c6c6c6"></div>
<svg class="a" style="left:523.20px;top:150.80px" width="5" height="4" viewBox="0 0 5 4"><path d="M0.6 3 L2.5 1 L4.4 3" fill="none" stroke="#666" stroke-width=".8"/></svg>
<svg class="a" style="left:523.20px;top:535.30px" width="5" height="4" viewBox="0 0 5 4"><path d="M0.6 1 L2.5 3 L4.4 1" fill="none" stroke="#666" stroke-width=".8"/></svg>
<div class="a" style="left:197.40px;top:541.50px;width:331.60px;height:7.40px;background:#ececec"></div>
<div class="a" style="left:205.00px;top:541.50px;width:175.00px;height:7.40px;background:#c6c6c6"></div>
<svg class="a" style="left:198.60px;top:543.30px" width="4" height="5" viewBox="0 0 4 5"><path d="M3 0.6 L1 2.5 L3 4.4" fill="none" stroke="#666" stroke-width=".8"/></svg>
<svg class="a" style="left:516.80px;top:543.30px" width="4" height="5" viewBox="0 0 4 5"><path d="M1 0.6 L3 2.5 L1 4.4" fill="none" stroke="#666" stroke-width=".8"/></svg>
<div class="a" style="left:535.00px;top:67.20px;width:264.60px;height:102.00px;border:1px solid #cdcdcd;box-sizing:border-box;border-bottom:none"></div>
<svg class="a" style="left:538.60px;top:69.30px" width="12.6" height="15.4" viewBox="0 0 12.6 15.4"><ellipse cx="6.3" cy="7.7" rx="5.7" ry="6.9" fill="#ee7a2e"/><ellipse cx="6.3" cy="7.7" rx="4.2" ry="5.2" fill="#fbe6d4"/><ellipse cx="6.3" cy="7.7" rx="3.1" ry="3.9" fill="#ee7a2e"/><ellipse cx="6.3" cy="7.7" rx="1.7" ry="2.1" fill="#fbe6d4"/><circle cx="6.3" cy="7.7" r=".9" fill="#d8541a"/></svg>
<div class="t" style="left:553.80px;top:75.17px;font-size:6.5px;transform:scaleX(0.584);color:#555;font-weight:normal;">Elenco Target Selezionati</div>
<svg class="a" style="left:784.2px;top:68.8px" width="11.8" height="16" viewBox="0 0 20 20" preserveAspectRatio="none"><defs><linearGradient id="g2" x1="0" y1="0" x2="0" y2="1"><stop offset="0" stop-color="#dde6f2"/><stop offset="1" stop-color="#8ea2c0"/></linearGradient></defs><polygon points="9.04,0.25 10.96,0.25 12.21,2.73 13.58,3.30 16.22,2.42 17.58,3.78 16.70,6.42 17.27,7.79 19.75,9.04 19.75,10.96 17.27,12.21 16.70,13.58 17.58,16.22 16.22,17.58 13.58,16.70 12.21,17.27 10.96,19.75 9.04,19.75 7.79,17.27 6.42,16.70 3.78,17.58 2.42,16.22 3.30,13.58 2.73,12.21 0.25,10.96 0.25,9.04 2.73,7.79 3.30,6.42 2.42,3.78 3.78,2.42 6.42,3.30 7.79,2.73" fill="url(#g2)" stroke="#8494b0" stroke-width="1" stroke-linejoin="round"/><circle cx="10" cy="10" r="3.2" fill="#f4f6fa" stroke="#7e8696" stroke-width="1.3"/></svg>
<div class="a" style="left:535.40px;top:86.20px;width:263.80px;height:81.60px;background:#fff;border-top:1px solid #c8c8c8"></div>
<div class="a" style="left:536.00px;top:87.20px;width:263.20px;height:10.10px;background:#eeeeee"></div>
<div class="a" style="left:536.00px;top:96.90px;width:263.20px;height:0.80px;background:#cacaca"></div>
<div class="a" style="left:632.20px;top:87.20px;width:0.70px;height:53.30px;background:#dadada"></div>
<div class="a" style="left:680.40px;top:87.20px;width:0.70px;height:53.30px;background:#dadada"></div>
<div class="a" style="left:728.70px;top:87.20px;width:0.70px;height:53.30px;background:#dadada"></div>
<div class="a" style="left:777.60px;top:87.20px;width:0.70px;height:53.30px;background:#dadada"></div>
<div class="t" style="left:537.10px;top:89.27px;font-size:6.5px;transform:scaleX(0.565);color:#444;font-weight:normal;">Descrizione</div>
<div class="t" style="left:633.30px;top:89.27px;font-size:6.5px;transform:scaleX(0.565);color:#444;font-weight:normal;">Ospiti</div>
<div class="t" style="left:729.80px;top:89.27px;font-size:6.5px;transform:scaleX(0.565);color:#444;font-weight:normal;">Entità</div>
<div class="t" style="left:778.70px;top:89.27px;font-size:6.5px;transform:scaleX(0.565);color:#444;font-weight:normal;">Profilo</div>
<div class="a" style="left:536.00px;top:97.50px;width:263.20px;height:10.82px;background:#d8d8d8"></div>
<div class="a" style="left:536.00px;top:107.72px;width:263.20px;height:0.60px;background:#e0e0e0"></div>
<div class="t" style="left:537.20px;top:100.08px;font-size:6.5px;transform:scaleX(0.565);color:#3a3a3a;font-weight:normal;">Adulti</div>
<div class="t" style="left:633.40px;top:100.08px;font-size:6.5px;transform:scaleX(0.565);color:#3a3a3a;font-weight:normal;">senza ospiti</div>
<div class="t" style="left:681.60px;top:100.08px;font-size:6.5px;transform:scaleX(0.565);color:#3a3a3a;font-weight:normal;">MCS</div>
<div class="t" style="right:23.60px;top:100.08px;font-size:6.5px;transform:scaleX(0.565);transform-origin:100% 50%;color:#3a3a3a;font-weight:normal;">52.383.692</div>
<div class="a" style="left:778.40px;top:98.40px;width:20.20px;height:9.22px;background:#f2f2f2;border:1px solid #d4d4d4;box-sizing:border-box"></div>
<div class="t" style="left:782.80px;top:100.08px;font-size:6.5px;transform:scaleX(0.565);color:#a8a8a8;font-weight:normal;">Profilo</div>
<div class="a" style="left:536.00px;top:118.54px;width:263.20px;height:0.60px;background:#e0e0e0"></div>
<div class="t" style="left:537.20px;top:110.89px;font-size:6.5px;transform:scaleX(0.565);color:#3a3a3a;font-weight:normal;">Donne 15+</div>
<div class="t" style="left:633.40px;top:110.89px;font-size:6.5px;transform:scaleX(0.565);color:#3a3a3a;font-weight:normal;">senza ospiti</div>
<div class="t" style="left:681.60px;top:110.89px;font-size:6.5px;transform:scaleX(0.565);color:#3a3a3a;font-weight:normal;">MCS</div>
<div class="t" style="right:23.60px;top:110.89px;font-size:6.5px;transform:scaleX(0.565);transform-origin:100% 50%;color:#3a3a3a;font-weight:normal;">27.188.667</div>
<div class="a" style="left:778.40px;top:109.22px;width:20.20px;height:9.22px;background:#f2f2f2;border:1px solid #d4d4d4;box-sizing:border-box"></div>
<div class="t" style="left:782.80px;top:110.89px;font-size:6.5px;transform:scaleX(0.565);color:#a8a8a8;font-weight:normal;">Profilo</div>
<div class="a" style="left:536.00px;top:129.36px;width:263.20px;height:0.60px;background:#e0e0e0"></div>
<div class="t" style="left:537.20px;top:121.72px;font-size:6.5px;transform:scaleX(0.565);color:#3a3a3a;font-weight:normal;">Uomini 15+</div>
<div class="t" style="left:633.40px;top:121.72px;font-size:6.5px;transform:scaleX(0.565);color:#3a3a3a;font-weight:normal;">senza ospiti</div>
<div class="t" style="left:681.60px;top:121.72px;font-size:6.5px;transform:scaleX(0.565);color:#3a3a3a;font-weight:normal;">MCS</div>
<div class="t" style="right:23.60px;top:121.72px;font-size:6.5px;transform:scaleX(0.565);transform-origin:100% 50%;color:#3a3a3a;font-weight:normal;">25.195.025</div>
<div class="a" style="left:778.40px;top:120.04px;width:20.20px;height:9.22px;background:#f2f2f2;border:1px solid #d4d4d4;box-sizing:border-box"></div>
<div class="t" style="left:782.80px;top:121.72px;font-size:6.5px;transform:scaleX(0.565);color:#a8a8a8;font-weight:normal;">Profilo</div>
<div class="a" style="left:536.00px;top:140.18px;width:263.20px;height:0.60px;background:#e0e0e0"></div>
<div class="t" style="left:537.20px;top:132.53px;font-size:6.5px;transform:scaleX(0.565);color:#3a3a3a;font-weight:normal;">1047</div>
<div class="t" style="left:633.40px;top:132.53px;font-size:6.5px;transform:scaleX(0.565);color:#3a3a3a;font-weight:normal;">senza ospiti</div>
<div class="t" style="left:681.60px;top:132.53px;font-size:6.5px;transform:scaleX(0.565);color:#3a3a3a;font-weight:normal;">Privato</div>
<div class="t" style="right:23.60px;top:132.53px;font-size:6.5px;transform:scaleX(0.565);transform-origin:100% 50%;color:#3a3a3a;font-weight:normal;">22.564.504</div>
<div class="a" style="left:778.40px;top:130.86px;width:20.20px;height:9.22px;background:#f2f2f2;border:1px solid #d4d4d4;box-sizing:border-box"></div>
<div class="t" style="left:782.80px;top:132.53px;font-size:6.5px;transform:scaleX(0.565);color:#a8a8a8;font-weight:normal;">Profilo</div>
<div class="a" style="left:535.40px;top:167.80px;width:264.20px;height:0.80px;background:#e6e6e6"></div>
<div class="a" style="left:535.00px;top:171.20px;width:264.60px;height:112.00px;border:1px solid #cdcdcd;box-sizing:border-box;border-bottom:none"></div>
<svg class="a" style="left:539.20px;top:170.80px" width="11" height="17.5" viewBox="0 0 11 17.5"><path d="M5.5 0.3 V2.8" stroke="#6a7ab8" stroke-width=".8"/><ellipse cx="5.4" cy="9.9" rx="4.5" ry="6.5" fill="#dfeaf2" stroke="#dc2c1c" stroke-width="1.8"/><path d="M5.5 6.5 V10" stroke="#d8281c" stroke-width=".7"/></svg>
<div class="t" style="left:554.00px;top:177.67px;font-size:6.5px;transform:scaleX(0.576);color:#555;font-weight:normal;">Fasce orarie</div>
<div class="a" style="left:535.40px;top:187.70px;width:264.20px;height:0.80px;background:#d2d2d2"></div>
<svg class="a" style="left:538.20px;top:191.40px" width="5.4" height="7.6" viewBox="0 0 5.4 7.6"><rect x="0.4" y="0.4" width="4.6000000000000005" height="6.8" fill="#f6f6fb" stroke="#9aa6cc" stroke-width=".6"/><rect x="1" y="1.22" width="1.6" height="1.3" fill="#e8743a"/><rect x="1" y="3.27" width="1.6" height="1.3" fill="#e8743a"/><rect x="1" y="5.32" width="1.6" height="1.3" fill="#6a8ad8"/><path d="M3.2 1.87 H4.4 M3.2 3.92 H4.4 M3.2 5.97 H4.4" stroke="#7a86b8" stroke-width=".6"/></svg>
<div class="t" style="left:545.40px;top:193.27px;font-size:6.5px;transform:scaleX(0.556);color:#444;font-weight:normal;">Gestisci Lista</div>
<svg class="a" style="left:567.80px;top:194.50px" width="2.6" height="2" viewBox="0 0 2.6 2"><path d="M0 0 H2.6 L1.3 1.8 Z" fill="#444"/></svg>
<div class="a" style="left:579.30px;top:189.50px;width:0.80px;height:12.00px;background:#d8d8d8"></div>
<div class="a" style="left:535.40px;top:202.30px;width:264.20px;height:80.60px;background:#fff;border:1px solid #c6c6c6;box-sizing:border-box"></div>
<div class="a" style="left:536.30px;top:203.20px;width:262.40px;height:8.80px;background:#eeeeee"></div>
<div class="a" style="left:536.30px;top:211.80px;width:262.40px;height:0.80px;background:#cacaca"></div>
<div class="a" style="left:588.40px;top:203.20px;width:0.70px;height:28.80px;background:#d6d6d6"></div>
<div class="a" style="left:605.80px;top:203.20px;width:0.70px;height:28.80px;background:#d6d6d6"></div>
<div class="a" style="left:623.50px;top:203.20px;width:0.70px;height:28.80px;background:#d6d6d6"></div>
<div class="a" style="left:634.20px;top:203.20px;width:0.70px;height:28.80px;background:#d6d6d6"></div>
<div class="t" style="left:537.10px;top:204.86px;font-size:6.4px;transform:scaleX(0.575);color:#444;font-weight:normal;">descrizione</div>
<div class="t" style="left:589.50px;top:204.86px;font-size:6.4px;transform:scaleX(0.575);color:#444;font-weight:normal;">dalle</div>
<div class="t" style="left:606.90px;top:204.86px;font-size:6.4px;transform:scaleX(0.575);color:#444;font-weight:normal;">alle</div>
<div class="t" style="left:537.10px;top:215.40px;font-size:6.0px;transform:scaleX(0.646);color:#3a3a3a;font-weight:normal;">dalle 20:00:00 alle 23:59:59</div>
<div class="t" style="left:589.80px;top:215.40px;font-size:6.0px;transform:scaleX(0.646);color:#3a3a3a;font-weight:normal;">20.00</div>
<div class="t" style="left:607.60px;top:215.40px;font-size:6.0px;transform:scaleX(0.646);color:#3a3a3a;font-weight:normal;">23.59</div>
<div class="a" style="left:536.30px;top:221.80px;width:262.40px;height:0.60px;background:#e4e4e4"></div>
<div class="a" style="left:536.30px;top:222.30px;width:87.20px;height:9.60px;background:#b2e6e8"></div>
<div class="a" style="left:536.30px;top:231.60px;width:98.00px;height:0.60px;background:#dedede"></div>
<div class="a" style="left:624.10px;top:212.90px;width:10.00px;height:9.00px;background:#f3f3f3;border:1px solid #d2d2d2;box-sizing:border-box"></div>
<svg class="a" style="left:626.20px;top:214.70px" width="6" height="5.8" viewBox="0 0 6 5.8"><path d="M1 1 L5 4.8 M5 1 L1 4.8" stroke="#e8503c" stroke-width="1.2"/></svg>
<div class="a" style="left:624.10px;top:222.50px;width:10.00px;height:9.00px;background:#f3f3f3;border:1px solid #d2d2d2;box-sizing:border-box"></div>
<svg class="a" style="left:626.20px;top:224.30px" width="6" height="5.8" viewBox="0 0 6 5.8"><path d="M1 1 L5 4.8 M5 1 L1 4.8" stroke="#e8503c" stroke-width="1.2"/></svg>
<div class="a" style="left:664.20px;top:287.30px;width:5.80px;height:1.00px;background:#9a9a9a"></div>
</div></body></html>
